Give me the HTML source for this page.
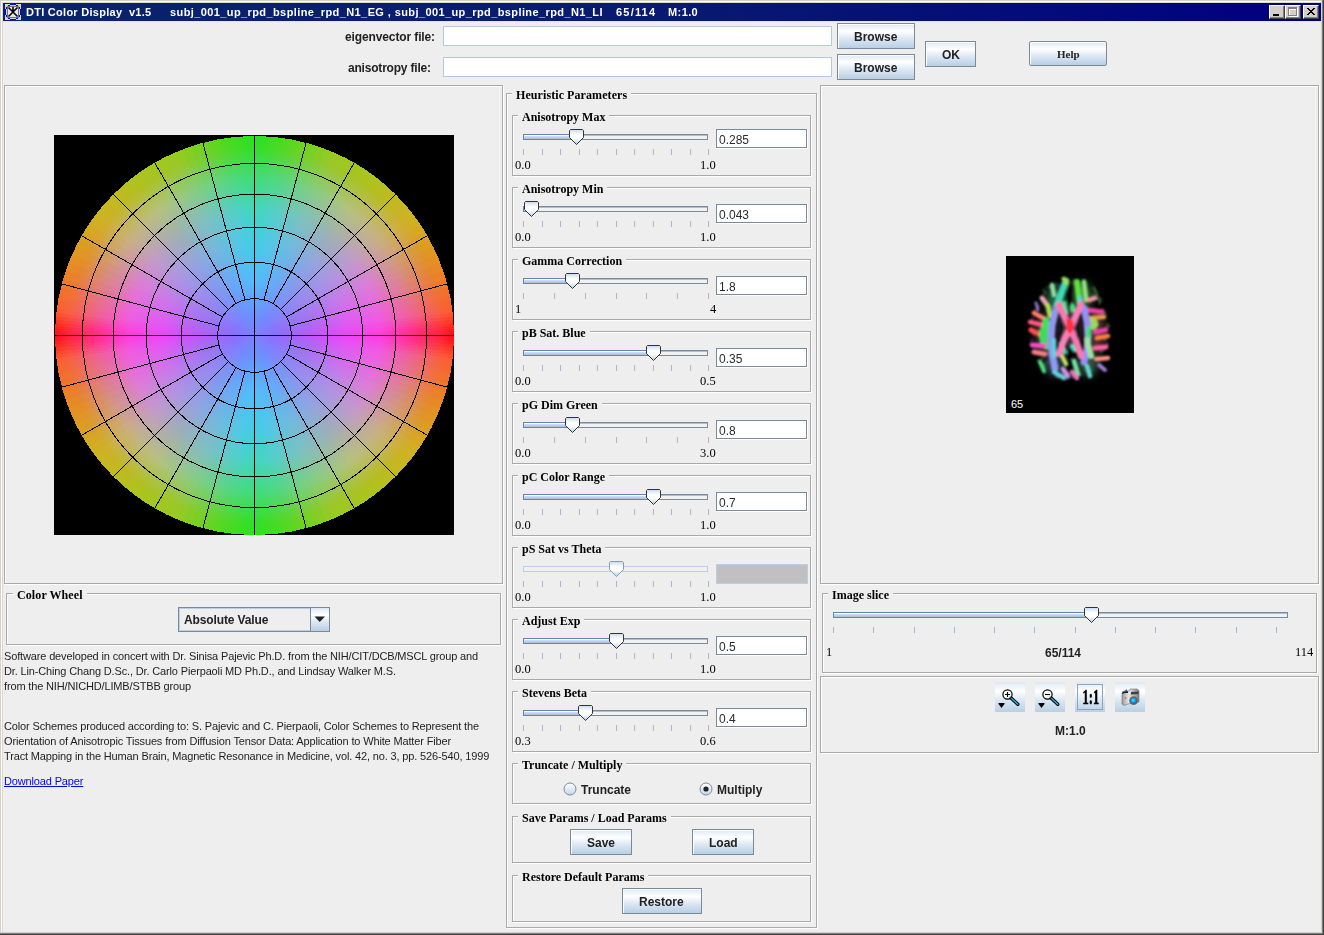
<!DOCTYPE html><html><head><meta charset="utf-8"><style>
html,body{margin:0;padding:0;}
body{width:1324px;height:935px;overflow:hidden;background:#eeeeee;position:relative;font-family:"Liberation Sans",sans-serif;}
.a{position:absolute;box-sizing:border-box;}
.t{position:absolute;white-space:pre;line-height:1;-webkit-font-smoothing:antialiased;will-change:transform;}
.btn{position:absolute;box-sizing:border-box;border:1px solid #7a8a99;background:linear-gradient(to bottom,#dde8f3 0%,#ffffff 30%,#dde8f3 60%,#b8cfe5 100%);box-shadow:inset 1px 1px 0 rgba(255,255,255,0.9);}
</style></head><body>
<div class="a" style="left:0px;top:0px;width:1324px;height:935px;background:#eeeeee"></div><div class="a" style="left:0px;top:0px;width:1324px;height:1px;background:#d4d0c8"></div><div class="a" style="left:0px;top:0px;width:1px;height:935px;background:#d4d0c8"></div><div class="a" style="left:1px;top:1px;width:1321px;height:1px;background:#ffffff"></div><div class="a" style="left:1px;top:1px;width:1px;height:933px;background:#ffffff"></div><div class="a" style="left:2px;top:2px;width:1319px;height:1px;background:#dcd8d0"></div><div class="a" style="left:2px;top:2px;width:1px;height:931px;background:#dcd8d0"></div><div class="a" style="left:3px;top:21px;width:1318px;height:1px;background:#e6e3de"></div><div class="a" style="left:1321px;top:1px;width:1px;height:933px;background:#d4d0c8"></div><div class="a" style="left:1px;top:932px;width:1321px;height:1px;background:#d4d0c8"></div><div class="a" style="left:1322px;top:0px;width:1px;height:935px;background:#808080"></div><div class="a" style="left:0px;top:933px;width:1323px;height:1px;background:#808080"></div><div class="a" style="left:1323px;top:0px;width:1px;height:935px;background:#404040"></div><div class="a" style="left:0px;top:934px;width:1324px;height:1px;background:#404040"></div><div class="a" style="left:3px;top:3px;width:1318px;height:18px;background:linear-gradient(to right,#0a246a,#081a70 50%,#000080)"></div><svg class="a" style="left:5px;top:4px" width="16" height="16" viewBox="0 0 16 16" shape-rendering="crispEdges">
<rect x="0" y="0" width="16" height="16" fill="#d8d4c8"/>
<rect x="2" y="2" width="12" height="12" fill="#e8e8e8" stroke="none"/>
<g fill="#0000ff"><rect x="5" y="0" width="6" height="1"/><rect x="5" y="15" width="6" height="1"/><rect x="0" y="5" width="1" height="6"/><rect x="15" y="5" width="1" height="6"/>
<rect x="3" y="1" width="2" height="1"/><rect x="11" y="1" width="2" height="1"/><rect x="3" y="14" width="2" height="1"/><rect x="11" y="14" width="2" height="1"/>
<rect x="1" y="3" width="1" height="2"/><rect x="1" y="11" width="1" height="2"/><rect x="14" y="3" width="1" height="2"/><rect x="14" y="11" width="1" height="2"/></g>
<rect x="2.5" y="2.5" width="11" height="11" fill="none" stroke="#707070" stroke-width="1"/>
</svg><svg class="a" style="left:5px;top:4px" width="16" height="16" viewBox="0 0 16 16">
<path d="M3.5 3.5 L12.5 12.5 M12.5 3.5 L3.5 12.5 M8 3 L8 8" stroke="#000" stroke-width="1.6" fill="none"/>
</svg><div class="t" style="left:26px;top:6.69px;font-family:'Liberation Sans', sans-serif;font-size:11px;font-weight:bold;color:#fff;letter-spacing:0.27px">DTI Color Display  v1.5</div><div class="t" style="left:169.5px;top:6.69px;font-family:'Liberation Sans', sans-serif;font-size:11px;font-weight:bold;color:#fff;letter-spacing:0.4px">subj_001_up_rpd_bspline_rpd_N1_EG , subj_001_up_rpd_bspline_rpd_N1_LI</div><div class="t" style="left:615.5px;top:6.69px;font-family:'Liberation Sans', sans-serif;font-size:11px;font-weight:bold;color:#fff;letter-spacing:1.2px">65/114</div><div class="t" style="left:668px;top:6.69px;font-family:'Liberation Sans', sans-serif;font-size:11px;font-weight:bold;color:#fff;letter-spacing:0.4px">M:1.0</div><div class="a" style="left:1269px;top:5px;width:16px;height:14px;background:#d4d0c8;border-top:1px solid #fff;border-left:1px solid #fff;border-right:1px solid #404040;border-bottom:1px solid #404040;box-shadow:inset -1px -1px 0 #808080"></div><div class="a" style="left:1285px;top:5px;width:16px;height:14px;background:#d4d0c8;border-top:1px solid #fff;border-left:1px solid #fff;border-right:1px solid #404040;border-bottom:1px solid #404040;box-shadow:inset -1px -1px 0 #808080"></div><div class="a" style="left:1303px;top:5px;width:16px;height:14px;background:#d4d0c8;border-top:1px solid #fff;border-left:1px solid #fff;border-right:1px solid #404040;border-bottom:1px solid #404040;box-shadow:inset -1px -1px 0 #808080"></div><div class="a" style="left:1273px;top:14px;width:6px;height:2px;background:#000"></div><div class="a" style="left:1289px;top:8px;width:9px;height:9px;border:1px solid #fff;border-top-width:2px"></div><div class="a" style="left:1288px;top:7px;width:9px;height:9px;border:1px solid #808080;border-top-width:2px"></div><svg class="a" style="left:1307px;top:8px" width="9" height="8" viewBox="0 0 9 8" shape-rendering="crispEdges"><g fill="#000">
<rect x="0" y="0" width="2" height="1"/><rect x="6" y="0" width="2" height="1"/>
<rect x="1" y="1" width="2" height="1"/><rect x="5" y="1" width="2" height="1"/>
<rect x="2" y="2" width="4" height="1"/><rect x="3" y="3" width="2" height="1"/>
<rect x="2" y="4" width="4" height="1"/><rect x="1" y="5" width="2" height="1"/><rect x="5" y="5" width="2" height="1"/>
<rect x="0" y="6" width="2" height="1"/><rect x="6" y="6" width="2" height="1"/></g></svg><div class="t" style="left:344.5px;top:30.84px;font-family:'Liberation Sans', sans-serif;font-size:12px;font-weight:bold;color:#222;letter-spacing:-0.12px">eigenvector file:</div><div class="t" style="left:347.5px;top:61.84px;font-family:'Liberation Sans', sans-serif;font-size:12px;font-weight:bold;color:#222;letter-spacing:-0.2px">anisotropy file:</div><div class="a" style="left:443px;top:26px;width:389px;height:20px;border:1px solid #b3c9e0;background:#fff"></div><div class="a" style="left:443px;top:57px;width:389px;height:20px;border:1px solid #b3c9e0;background:#fff"></div><div class="btn" style="left:837px;top:23px;width:78px;height:26px;"></div><div class="t" style="left:853.5px;top:30.84px;font-family:'Liberation Sans', sans-serif;font-size:12px;font-weight:bold;color:#222;">Browse</div><div class="btn" style="left:837px;top:54px;width:78px;height:26px;"></div><div class="t" style="left:853.5px;top:61.84px;font-family:'Liberation Sans', sans-serif;font-size:12px;font-weight:bold;color:#222;">Browse</div><div class="btn" style="left:925px;top:41px;width:51px;height:26px;"></div><div class="t" style="left:941.5px;top:48.84px;font-family:'Liberation Sans', sans-serif;font-size:12px;font-weight:bold;color:#222;">OK</div><div class="btn" style="left:1029px;top:41px;width:78px;height:25px;border-radius:2px"></div><div class="t" style="left:1057px;top:48.79px;font-family:'Liberation Serif', serif;font-size:11px;font-weight:bold;color:#222;">Help</div><div class="a" style="left:4px;top:85px;width:499px;height:499px;border:1px solid #a9a9a9;box-shadow:inset 1px 1px 0 #fff,1px 1px 0 #fff;box-sizing:border-box"></div><div class="a" style="left:54px;top:135px;width:400px;height:400px;background:#000"></div><svg class="a" style="left:54px;top:135px" width="400" height="400" viewBox="0 0 400 400"><defs><radialGradient id="w0" gradientUnits="userSpaceOnUse" cx="200.5" cy="200.5" r="200.0"><stop offset="0.0000" stop-color="#7d80ff"/><stop offset="0.0925" stop-color="#8c6eff"/><stop offset="0.1846" stop-color="#a960ff"/><stop offset="0.2759" stop-color="#c652fe"/><stop offset="0.3660" stop-color="#da4afc"/><stop offset="0.4546" stop-color="#ef42fa"/><stop offset="0.5412" stop-color="#f63eed"/><stop offset="0.6255" stop-color="#fe3ae0"/><stop offset="0.7071" stop-color="#ff32b6"/><stop offset="0.7857" stop-color="#ff2a8c"/><stop offset="0.8609" stop-color="#ff2365"/><stop offset="0.9325" stop-color="#ff1c3e"/><stop offset="1.0000" stop-color="#ff0614"/></radialGradient><radialGradient id="w1" gradientUnits="userSpaceOnUse" cx="200.5" cy="200.5" r="200.0"><stop offset="0.0000" stop-color="#7d80ff"/><stop offset="0.0925" stop-color="#8c6eff"/><stop offset="0.1846" stop-color="#a662fe"/><stop offset="0.2759" stop-color="#c254fd"/><stop offset="0.3660" stop-color="#d74dfb"/><stop offset="0.4546" stop-color="#ec46f9"/><stop offset="0.5412" stop-color="#f442ed"/><stop offset="0.6255" stop-color="#fc3fe1"/><stop offset="0.7071" stop-color="#fe37b7"/><stop offset="0.7857" stop-color="#ff2e8d"/><stop offset="0.8609" stop-color="#ff2a64"/><stop offset="0.9325" stop-color="#ff253c"/><stop offset="1.0000" stop-color="#ff1014"/></radialGradient><radialGradient id="w2" gradientUnits="userSpaceOnUse" cx="200.5" cy="200.5" r="200.0"><stop offset="0.0000" stop-color="#7d80ff"/><stop offset="0.0925" stop-color="#8b6fff"/><stop offset="0.1846" stop-color="#a463fd"/><stop offset="0.2759" stop-color="#bd58fc"/><stop offset="0.3660" stop-color="#d351fa"/><stop offset="0.4546" stop-color="#e94af8"/><stop offset="0.5412" stop-color="#f247ed"/><stop offset="0.6255" stop-color="#fb44e2"/><stop offset="0.7071" stop-color="#fd3bb8"/><stop offset="0.7857" stop-color="#ff338e"/><stop offset="0.8609" stop-color="#ff3063"/><stop offset="0.9325" stop-color="#ff2e38"/><stop offset="1.0000" stop-color="#ff1b14"/></radialGradient><radialGradient id="w3" gradientUnits="userSpaceOnUse" cx="200.5" cy="200.5" r="200.0"><stop offset="0.0000" stop-color="#7d80ff"/><stop offset="0.0925" stop-color="#8b6fff"/><stop offset="0.1846" stop-color="#a265fd"/><stop offset="0.2759" stop-color="#ba5afa"/><stop offset="0.3660" stop-color="#d054f9"/><stop offset="0.4546" stop-color="#e74df8"/><stop offset="0.5412" stop-color="#f04bed"/><stop offset="0.6255" stop-color="#f948e2"/><stop offset="0.7071" stop-color="#fb41b8"/><stop offset="0.7857" stop-color="#fd3a8f"/><stop offset="0.8609" stop-color="#fe3863"/><stop offset="0.9325" stop-color="#fe3738"/><stop offset="1.0000" stop-color="#ff2817"/></radialGradient><radialGradient id="w4" gradientUnits="userSpaceOnUse" cx="200.5" cy="200.5" r="200.0"><stop offset="0.0000" stop-color="#7d80ff"/><stop offset="0.0925" stop-color="#8b6fff"/><stop offset="0.1846" stop-color="#a166fc"/><stop offset="0.2759" stop-color="#b75df9"/><stop offset="0.3660" stop-color="#ce56f8"/><stop offset="0.4546" stop-color="#e650f7"/><stop offset="0.5412" stop-color="#ee4eec"/><stop offset="0.6255" stop-color="#f74de2"/><stop offset="0.7071" stop-color="#f848b9"/><stop offset="0.7857" stop-color="#fa4391"/><stop offset="0.8609" stop-color="#fb4265"/><stop offset="0.9325" stop-color="#fd413a"/><stop offset="1.0000" stop-color="#fe351c"/></radialGradient><radialGradient id="w5" gradientUnits="userSpaceOnUse" cx="200.5" cy="200.5" r="200.0"><stop offset="0.0000" stop-color="#7d80ff"/><stop offset="0.0925" stop-color="#8a70ff"/><stop offset="0.1846" stop-color="#a067fc"/><stop offset="0.2759" stop-color="#b55ff8"/><stop offset="0.3660" stop-color="#cc59f7"/><stop offset="0.4546" stop-color="#e453f6"/><stop offset="0.5412" stop-color="#ec52ec"/><stop offset="0.6255" stop-color="#f451e1"/><stop offset="0.7071" stop-color="#f64fba"/><stop offset="0.7857" stop-color="#f74d92"/><stop offset="0.8609" stop-color="#f94c67"/><stop offset="0.9325" stop-color="#fb4c3c"/><stop offset="1.0000" stop-color="#fd4221"/></radialGradient><radialGradient id="w6" gradientUnits="userSpaceOnUse" cx="200.5" cy="200.5" r="200.0"><stop offset="0.0000" stop-color="#7d80ff"/><stop offset="0.0925" stop-color="#8a70ff"/><stop offset="0.1846" stop-color="#9e69fb"/><stop offset="0.2759" stop-color="#b262f7"/><stop offset="0.3660" stop-color="#ca5bf6"/><stop offset="0.4546" stop-color="#e355f6"/><stop offset="0.5412" stop-color="#ea55eb"/><stop offset="0.6255" stop-color="#f256e1"/><stop offset="0.7071" stop-color="#f356bb"/><stop offset="0.7857" stop-color="#f35694"/><stop offset="0.8609" stop-color="#f65669"/><stop offset="0.9325" stop-color="#fa563e"/><stop offset="1.0000" stop-color="#fd4f27"/></radialGradient><radialGradient id="w7" gradientUnits="userSpaceOnUse" cx="200.5" cy="200.5" r="200.0"><stop offset="0.0000" stop-color="#7d80ff"/><stop offset="0.0925" stop-color="#8a70ff"/><stop offset="0.1846" stop-color="#9d6afa"/><stop offset="0.2759" stop-color="#b064f6"/><stop offset="0.3660" stop-color="#c85ef6"/><stop offset="0.4546" stop-color="#e158f5"/><stop offset="0.5412" stop-color="#e859eb"/><stop offset="0.6255" stop-color="#f05ae1"/><stop offset="0.7071" stop-color="#f05dbc"/><stop offset="0.7857" stop-color="#f06096"/><stop offset="0.8609" stop-color="#f4606b"/><stop offset="0.9325" stop-color="#f86040"/><stop offset="1.0000" stop-color="#fc5c2c"/></radialGradient><radialGradient id="w8" gradientUnits="userSpaceOnUse" cx="200.5" cy="200.5" r="200.0"><stop offset="0.0000" stop-color="#7d80ff"/><stop offset="0.0925" stop-color="#8a70ff"/><stop offset="0.1846" stop-color="#9c6bfa"/><stop offset="0.2759" stop-color="#af65f6"/><stop offset="0.3660" stop-color="#c760f5"/><stop offset="0.4546" stop-color="#df5af4"/><stop offset="0.5412" stop-color="#e75bea"/><stop offset="0.6255" stop-color="#ef5ce0"/><stop offset="0.7071" stop-color="#ef5fbb"/><stop offset="0.7857" stop-color="#ee6395"/><stop offset="0.8609" stop-color="#f2636a"/><stop offset="0.9325" stop-color="#f7633e"/><stop offset="1.0000" stop-color="#fa602b"/></radialGradient><radialGradient id="w9" gradientUnits="userSpaceOnUse" cx="200.5" cy="200.5" r="200.0"><stop offset="0.0000" stop-color="#7d80ff"/><stop offset="0.0925" stop-color="#8971ff"/><stop offset="0.1846" stop-color="#9c6cfa"/><stop offset="0.2759" stop-color="#ae67f5"/><stop offset="0.3660" stop-color="#c661f4"/><stop offset="0.4546" stop-color="#de5cf4"/><stop offset="0.5412" stop-color="#e65dea"/><stop offset="0.6255" stop-color="#ee5ee0"/><stop offset="0.7071" stop-color="#ed62ba"/><stop offset="0.7857" stop-color="#ed6694"/><stop offset="0.8609" stop-color="#f16668"/><stop offset="0.9325" stop-color="#f5663d"/><stop offset="1.0000" stop-color="#f9632a"/></radialGradient><radialGradient id="w10" gradientUnits="userSpaceOnUse" cx="200.5" cy="200.5" r="200.0"><stop offset="0.0000" stop-color="#7d80ff"/><stop offset="0.0925" stop-color="#8971ff"/><stop offset="0.1846" stop-color="#9b6dfa"/><stop offset="0.2759" stop-color="#ad68f5"/><stop offset="0.3660" stop-color="#c463f4"/><stop offset="0.4546" stop-color="#dc5ef3"/><stop offset="0.5412" stop-color="#e45fe9"/><stop offset="0.6255" stop-color="#ed60df"/><stop offset="0.7071" stop-color="#ec64b9"/><stop offset="0.7857" stop-color="#eb6992"/><stop offset="0.8609" stop-color="#ef6967"/><stop offset="0.9325" stop-color="#f4693b"/><stop offset="1.0000" stop-color="#f76729"/></radialGradient><radialGradient id="w11" gradientUnits="userSpaceOnUse" cx="200.5" cy="200.5" r="200.0"><stop offset="0.0000" stop-color="#7d80ff"/><stop offset="0.0925" stop-color="#8872ff"/><stop offset="0.1846" stop-color="#9a6dfa"/><stop offset="0.2759" stop-color="#ac69f4"/><stop offset="0.3660" stop-color="#c365f3"/><stop offset="0.4546" stop-color="#da61f2"/><stop offset="0.5412" stop-color="#e361e8"/><stop offset="0.6255" stop-color="#ec62de"/><stop offset="0.7071" stop-color="#ea67b8"/><stop offset="0.7857" stop-color="#e96c91"/><stop offset="0.8609" stop-color="#ee6c65"/><stop offset="0.9325" stop-color="#f36c3a"/><stop offset="1.0000" stop-color="#f66a28"/></radialGradient><radialGradient id="w12" gradientUnits="userSpaceOnUse" cx="200.5" cy="200.5" r="200.0"><stop offset="0.0000" stop-color="#7d80ff"/><stop offset="0.0925" stop-color="#8872ff"/><stop offset="0.1846" stop-color="#996ff9"/><stop offset="0.2759" stop-color="#aa6cf4"/><stop offset="0.3660" stop-color="#c168f2"/><stop offset="0.4546" stop-color="#d764f1"/><stop offset="0.5412" stop-color="#e165e7"/><stop offset="0.6255" stop-color="#ea66dd"/><stop offset="0.7071" stop-color="#e86bb6"/><stop offset="0.7857" stop-color="#e6718f"/><stop offset="0.8609" stop-color="#eb7163"/><stop offset="0.9325" stop-color="#f07137"/><stop offset="1.0000" stop-color="#f37127"/></radialGradient><radialGradient id="w13" gradientUnits="userSpaceOnUse" cx="200.5" cy="200.5" r="200.0"><stop offset="0.0000" stop-color="#7d80ff"/><stop offset="0.0925" stop-color="#8773ff"/><stop offset="0.1846" stop-color="#9771f9"/><stop offset="0.2759" stop-color="#a76ff3"/><stop offset="0.3660" stop-color="#bd6cf1"/><stop offset="0.4546" stop-color="#d36af0"/><stop offset="0.5412" stop-color="#dd6ae6"/><stop offset="0.6255" stop-color="#e76adc"/><stop offset="0.7071" stop-color="#e471b4"/><stop offset="0.7857" stop-color="#e2788c"/><stop offset="0.8609" stop-color="#e7785f"/><stop offset="0.9325" stop-color="#ed7833"/><stop offset="1.0000" stop-color="#ef7a24"/></radialGradient><radialGradient id="w14" gradientUnits="userSpaceOnUse" cx="200.5" cy="200.5" r="200.0"><stop offset="0.0000" stop-color="#7d80ff"/><stop offset="0.0925" stop-color="#8674ff"/><stop offset="0.1846" stop-color="#9573f8"/><stop offset="0.2759" stop-color="#a572f2"/><stop offset="0.3660" stop-color="#ba71f0"/><stop offset="0.4546" stop-color="#cf6fee"/><stop offset="0.5412" stop-color="#da6fe4"/><stop offset="0.6255" stop-color="#e570da"/><stop offset="0.7071" stop-color="#e178b1"/><stop offset="0.7857" stop-color="#dd8089"/><stop offset="0.8609" stop-color="#e4805c"/><stop offset="0.9325" stop-color="#ea802f"/><stop offset="1.0000" stop-color="#eb8322"/></radialGradient><radialGradient id="w15" gradientUnits="userSpaceOnUse" cx="200.5" cy="200.5" r="200.0"><stop offset="0.0000" stop-color="#7d80ff"/><stop offset="0.0925" stop-color="#8575ff"/><stop offset="0.1846" stop-color="#9375f8"/><stop offset="0.2759" stop-color="#a276f1"/><stop offset="0.3660" stop-color="#b675ee"/><stop offset="0.4546" stop-color="#cb74ec"/><stop offset="0.5412" stop-color="#d674e2"/><stop offset="0.6255" stop-color="#e274d8"/><stop offset="0.7071" stop-color="#dd7eaf"/><stop offset="0.7857" stop-color="#d98786"/><stop offset="0.8609" stop-color="#e08758"/><stop offset="0.9325" stop-color="#e6872b"/><stop offset="1.0000" stop-color="#e78c20"/></radialGradient><radialGradient id="w16" gradientUnits="userSpaceOnUse" cx="200.5" cy="200.5" r="200.0"><stop offset="0.0000" stop-color="#7d80ff"/><stop offset="0.0925" stop-color="#8476ff"/><stop offset="0.1846" stop-color="#9278f8"/><stop offset="0.2759" stop-color="#a079f0"/><stop offset="0.3660" stop-color="#b379ed"/><stop offset="0.4546" stop-color="#c679eb"/><stop offset="0.5412" stop-color="#d37ae0"/><stop offset="0.6255" stop-color="#df7ad6"/><stop offset="0.7071" stop-color="#da84ad"/><stop offset="0.7857" stop-color="#d58e84"/><stop offset="0.8609" stop-color="#dc8e56"/><stop offset="0.9325" stop-color="#e38e28"/><stop offset="1.0000" stop-color="#e3941e"/></radialGradient><radialGradient id="w17" gradientUnits="userSpaceOnUse" cx="200.5" cy="200.5" r="200.0"><stop offset="0.0000" stop-color="#7d80ff"/><stop offset="0.0925" stop-color="#8278ff"/><stop offset="0.1846" stop-color="#907af8"/><stop offset="0.2759" stop-color="#9e7bf0"/><stop offset="0.3660" stop-color="#b07ded"/><stop offset="0.4546" stop-color="#c27ee9"/><stop offset="0.5412" stop-color="#ce7fdf"/><stop offset="0.6255" stop-color="#da80d4"/><stop offset="0.7071" stop-color="#d68aab"/><stop offset="0.7857" stop-color="#d39483"/><stop offset="0.8609" stop-color="#d99456"/><stop offset="0.9325" stop-color="#e09428"/><stop offset="1.0000" stop-color="#e0991e"/></radialGradient><radialGradient id="w18" gradientUnits="userSpaceOnUse" cx="200.5" cy="200.5" r="200.0"><stop offset="0.0000" stop-color="#7d80ff"/><stop offset="0.0925" stop-color="#817aff"/><stop offset="0.1846" stop-color="#8f7cf8"/><stop offset="0.2759" stop-color="#9d7ef0"/><stop offset="0.3660" stop-color="#ad80ec"/><stop offset="0.4546" stop-color="#bc83e8"/><stop offset="0.5412" stop-color="#c984dd"/><stop offset="0.6255" stop-color="#d585d1"/><stop offset="0.7071" stop-color="#d390aa"/><stop offset="0.7857" stop-color="#d19a82"/><stop offset="0.8609" stop-color="#d69a55"/><stop offset="0.9325" stop-color="#dc9a28"/><stop offset="1.0000" stop-color="#dc9f1e"/></radialGradient><radialGradient id="w19" gradientUnits="userSpaceOnUse" cx="200.5" cy="200.5" r="200.0"><stop offset="0.0000" stop-color="#7d80ff"/><stop offset="0.0925" stop-color="#807cff"/><stop offset="0.1846" stop-color="#8e7ef7"/><stop offset="0.2759" stop-color="#9c81f0"/><stop offset="0.3660" stop-color="#aa84ec"/><stop offset="0.4546" stop-color="#b887e7"/><stop offset="0.5412" stop-color="#c489db"/><stop offset="0.6255" stop-color="#d08bcf"/><stop offset="0.7071" stop-color="#cf96a8"/><stop offset="0.7857" stop-color="#cea082"/><stop offset="0.8609" stop-color="#d4a055"/><stop offset="0.9325" stop-color="#d9a028"/><stop offset="1.0000" stop-color="#d9a51e"/></radialGradient><radialGradient id="w20" gradientUnits="userSpaceOnUse" cx="200.5" cy="200.5" r="200.0"><stop offset="0.0000" stop-color="#7d80ff"/><stop offset="0.0925" stop-color="#7f7dff"/><stop offset="0.1846" stop-color="#8d80f8"/><stop offset="0.2759" stop-color="#9a83f0"/><stop offset="0.3660" stop-color="#a688eb"/><stop offset="0.4546" stop-color="#b28ce6"/><stop offset="0.5412" stop-color="#bf8fd9"/><stop offset="0.6255" stop-color="#cb91cc"/><stop offset="0.7071" stop-color="#cc9ba7"/><stop offset="0.7857" stop-color="#cca681"/><stop offset="0.8609" stop-color="#d1a655"/><stop offset="0.9325" stop-color="#d6a628"/><stop offset="1.0000" stop-color="#d6aa1e"/></radialGradient><radialGradient id="w21" gradientUnits="userSpaceOnUse" cx="200.5" cy="200.5" r="200.0"><stop offset="0.0000" stop-color="#7d80ff"/><stop offset="0.0925" stop-color="#7e7fff"/><stop offset="0.1846" stop-color="#8b82f8"/><stop offset="0.2759" stop-color="#9986f0"/><stop offset="0.3660" stop-color="#a38bea"/><stop offset="0.4546" stop-color="#ae91e5"/><stop offset="0.5412" stop-color="#ba94d7"/><stop offset="0.6255" stop-color="#c697ca"/><stop offset="0.7071" stop-color="#c8a1a5"/><stop offset="0.7857" stop-color="#caac80"/><stop offset="0.8609" stop-color="#ceac54"/><stop offset="0.9325" stop-color="#d2ac28"/><stop offset="1.0000" stop-color="#d2b01e"/></radialGradient><radialGradient id="w22" gradientUnits="userSpaceOnUse" cx="200.5" cy="200.5" r="200.0"><stop offset="0.0000" stop-color="#7d80ff"/><stop offset="0.0925" stop-color="#7d80ff"/><stop offset="0.1846" stop-color="#8a85f8"/><stop offset="0.2759" stop-color="#9789f0"/><stop offset="0.3660" stop-color="#a08fea"/><stop offset="0.4546" stop-color="#a995e4"/><stop offset="0.5412" stop-color="#b598d5"/><stop offset="0.6255" stop-color="#c19cc7"/><stop offset="0.7071" stop-color="#c4a6a3"/><stop offset="0.7857" stop-color="#c7b180"/><stop offset="0.8609" stop-color="#cbb154"/><stop offset="0.9325" stop-color="#ceb128"/><stop offset="1.0000" stop-color="#ceb51e"/></radialGradient><radialGradient id="w23" gradientUnits="userSpaceOnUse" cx="200.5" cy="200.5" r="200.0"><stop offset="0.0000" stop-color="#7d80ff"/><stop offset="0.0925" stop-color="#7b81ff"/><stop offset="0.1846" stop-color="#8786f8"/><stop offset="0.2759" stop-color="#938bf0"/><stop offset="0.3660" stop-color="#9c92ea"/><stop offset="0.4546" stop-color="#a598e3"/><stop offset="0.5412" stop-color="#b09cd3"/><stop offset="0.6255" stop-color="#bba0c3"/><stop offset="0.7071" stop-color="#c0aaa1"/><stop offset="0.7857" stop-color="#c5b380"/><stop offset="0.8609" stop-color="#c7b353"/><stop offset="0.9325" stop-color="#c9b326"/><stop offset="1.0000" stop-color="#c9b71e"/></radialGradient><radialGradient id="w24" gradientUnits="userSpaceOnUse" cx="200.5" cy="200.5" r="200.0"><stop offset="0.0000" stop-color="#7d80ff"/><stop offset="0.0925" stop-color="#7a82ff"/><stop offset="0.1846" stop-color="#8588f8"/><stop offset="0.2759" stop-color="#8f8ef0"/><stop offset="0.3660" stop-color="#9894e9"/><stop offset="0.4546" stop-color="#a09be3"/><stop offset="0.5412" stop-color="#ab9fd1"/><stop offset="0.6255" stop-color="#b6a3bf"/><stop offset="0.7071" stop-color="#bcad9f"/><stop offset="0.7857" stop-color="#c2b680"/><stop offset="0.8609" stop-color="#c3b652"/><stop offset="0.9325" stop-color="#c4b625"/><stop offset="1.0000" stop-color="#c4ba1d"/></radialGradient><radialGradient id="w25" gradientUnits="userSpaceOnUse" cx="200.5" cy="200.5" r="200.0"><stop offset="0.0000" stop-color="#7d80ff"/><stop offset="0.0925" stop-color="#7983ff"/><stop offset="0.1846" stop-color="#828af7"/><stop offset="0.2759" stop-color="#8b91f0"/><stop offset="0.3660" stop-color="#9497e9"/><stop offset="0.4546" stop-color="#9c9de2"/><stop offset="0.5412" stop-color="#a6a2cf"/><stop offset="0.6255" stop-color="#b0a7bb"/><stop offset="0.7071" stop-color="#b7b09d"/><stop offset="0.7857" stop-color="#bfb980"/><stop offset="0.8609" stop-color="#bfb952"/><stop offset="0.9325" stop-color="#beb924"/><stop offset="1.0000" stop-color="#bebd1d"/></radialGradient><radialGradient id="w26" gradientUnits="userSpaceOnUse" cx="200.5" cy="200.5" r="200.0"><stop offset="0.0000" stop-color="#7d80ff"/><stop offset="0.0925" stop-color="#7884ff"/><stop offset="0.1846" stop-color="#7f8cf8"/><stop offset="0.2759" stop-color="#8793f0"/><stop offset="0.3660" stop-color="#8f9ae9"/><stop offset="0.4546" stop-color="#98a0e2"/><stop offset="0.5412" stop-color="#a1a5cc"/><stop offset="0.6255" stop-color="#aaaab7"/><stop offset="0.7071" stop-color="#b3b39b"/><stop offset="0.7857" stop-color="#bdbb80"/><stop offset="0.8609" stop-color="#bbbb51"/><stop offset="0.9325" stop-color="#b9bb22"/><stop offset="1.0000" stop-color="#b9bf1d"/></radialGradient><radialGradient id="w27" gradientUnits="userSpaceOnUse" cx="200.5" cy="200.5" r="200.0"><stop offset="0.0000" stop-color="#7d80ff"/><stop offset="0.0925" stop-color="#7785ff"/><stop offset="0.1846" stop-color="#7d8ef8"/><stop offset="0.2759" stop-color="#8396f0"/><stop offset="0.3660" stop-color="#8b9de9"/><stop offset="0.4546" stop-color="#94a3e1"/><stop offset="0.5412" stop-color="#9ca8ca"/><stop offset="0.6255" stop-color="#a4aeb3"/><stop offset="0.7071" stop-color="#afb699"/><stop offset="0.7857" stop-color="#babe80"/><stop offset="0.8609" stop-color="#b7be50"/><stop offset="0.9325" stop-color="#b4be21"/><stop offset="1.0000" stop-color="#b4c21c"/></radialGradient><radialGradient id="w28" gradientUnits="userSpaceOnUse" cx="200.5" cy="200.5" r="200.0"><stop offset="0.0000" stop-color="#7d80ff"/><stop offset="0.0925" stop-color="#7686ff"/><stop offset="0.1846" stop-color="#7a90f8"/><stop offset="0.2759" stop-color="#7f99f0"/><stop offset="0.3660" stop-color="#879fe9"/><stop offset="0.4546" stop-color="#8fa6e1"/><stop offset="0.5412" stop-color="#97abc9"/><stop offset="0.6255" stop-color="#9eb1b1"/><stop offset="0.7071" stop-color="#aab998"/><stop offset="0.7857" stop-color="#b6c180"/><stop offset="0.8609" stop-color="#b2c050"/><stop offset="0.9325" stop-color="#afc020"/><stop offset="1.0000" stop-color="#afc41c"/></radialGradient><radialGradient id="w29" gradientUnits="userSpaceOnUse" cx="200.5" cy="200.5" r="200.0"><stop offset="0.0000" stop-color="#7d80ff"/><stop offset="0.0925" stop-color="#7487ff"/><stop offset="0.1846" stop-color="#7891f8"/><stop offset="0.2759" stop-color="#7b9bf2"/><stop offset="0.3660" stop-color="#82a2e9"/><stop offset="0.4546" stop-color="#8aa9e1"/><stop offset="0.5412" stop-color="#91aeca"/><stop offset="0.6255" stop-color="#99b3b3"/><stop offset="0.7071" stop-color="#a3bb9a"/><stop offset="0.7857" stop-color="#aec380"/><stop offset="0.8609" stop-color="#acc251"/><stop offset="0.9325" stop-color="#abc222"/><stop offset="1.0000" stop-color="#aac61c"/></radialGradient><radialGradient id="w30" gradientUnits="userSpaceOnUse" cx="200.5" cy="200.5" r="200.0"><stop offset="0.0000" stop-color="#7d80ff"/><stop offset="0.0925" stop-color="#7388ff"/><stop offset="0.1846" stop-color="#7593f9"/><stop offset="0.2759" stop-color="#779ef3"/><stop offset="0.3660" stop-color="#7ea5ea"/><stop offset="0.4546" stop-color="#84ace1"/><stop offset="0.5412" stop-color="#8cb1cb"/><stop offset="0.6255" stop-color="#94b6b6"/><stop offset="0.7071" stop-color="#9dbd9b"/><stop offset="0.7857" stop-color="#a6c580"/><stop offset="0.8609" stop-color="#a6c452"/><stop offset="0.9325" stop-color="#a7c323"/><stop offset="1.0000" stop-color="#a6c71d"/></radialGradient><radialGradient id="w31" gradientUnits="userSpaceOnUse" cx="200.5" cy="200.5" r="200.0"><stop offset="0.0000" stop-color="#7d80ff"/><stop offset="0.0925" stop-color="#7289ff"/><stop offset="0.1846" stop-color="#7295fa"/><stop offset="0.2759" stop-color="#73a1f4"/><stop offset="0.3660" stop-color="#79a8ea"/><stop offset="0.4546" stop-color="#7fafe0"/><stop offset="0.5412" stop-color="#87b4cd"/><stop offset="0.6255" stop-color="#8eb9b9"/><stop offset="0.7071" stop-color="#96c09c"/><stop offset="0.7857" stop-color="#9ec780"/><stop offset="0.8609" stop-color="#a0c652"/><stop offset="0.9325" stop-color="#a3c424"/><stop offset="1.0000" stop-color="#a2c81d"/></radialGradient><radialGradient id="w32" gradientUnits="userSpaceOnUse" cx="200.5" cy="200.5" r="200.0"><stop offset="0.0000" stop-color="#7d80ff"/><stop offset="0.0925" stop-color="#708aff"/><stop offset="0.1846" stop-color="#7097fa"/><stop offset="0.2759" stop-color="#6fa3f6"/><stop offset="0.3660" stop-color="#74abeb"/><stop offset="0.4546" stop-color="#79b3e0"/><stop offset="0.5412" stop-color="#81b7ce"/><stop offset="0.6255" stop-color="#89bbbb"/><stop offset="0.7071" stop-color="#8fc29e"/><stop offset="0.7857" stop-color="#96c980"/><stop offset="0.8609" stop-color="#9ac753"/><stop offset="0.9325" stop-color="#9fc626"/><stop offset="1.0000" stop-color="#9dca1d"/></radialGradient><radialGradient id="w33" gradientUnits="userSpaceOnUse" cx="200.5" cy="200.5" r="200.0"><stop offset="0.0000" stop-color="#7d80ff"/><stop offset="0.0925" stop-color="#6f8bff"/><stop offset="0.1846" stop-color="#6d99fb"/><stop offset="0.2759" stop-color="#6ba6f7"/><stop offset="0.3660" stop-color="#6faeec"/><stop offset="0.4546" stop-color="#74b6e0"/><stop offset="0.5412" stop-color="#7cbacf"/><stop offset="0.6255" stop-color="#84bebe"/><stop offset="0.7071" stop-color="#89c49f"/><stop offset="0.7857" stop-color="#8ecb80"/><stop offset="0.8609" stop-color="#94c954"/><stop offset="0.9325" stop-color="#9bc727"/><stop offset="1.0000" stop-color="#99cb1e"/></radialGradient><radialGradient id="w34" gradientUnits="userSpaceOnUse" cx="200.5" cy="200.5" r="200.0"><stop offset="0.0000" stop-color="#7d80ff"/><stop offset="0.0925" stop-color="#6e8cff"/><stop offset="0.1846" stop-color="#6a9bfc"/><stop offset="0.2759" stop-color="#67a9f8"/><stop offset="0.3660" stop-color="#6bb1ec"/><stop offset="0.4546" stop-color="#6eb9e0"/><stop offset="0.5412" stop-color="#76bdd0"/><stop offset="0.6255" stop-color="#7ec1c0"/><stop offset="0.7071" stop-color="#81c7a0"/><stop offset="0.7857" stop-color="#85cd80"/><stop offset="0.8609" stop-color="#8dcb54"/><stop offset="0.9325" stop-color="#94c928"/><stop offset="1.0000" stop-color="#92cd1e"/></radialGradient><radialGradient id="w35" gradientUnits="userSpaceOnUse" cx="200.5" cy="200.5" r="200.0"><stop offset="0.0000" stop-color="#7d80ff"/><stop offset="0.0925" stop-color="#6d8dff"/><stop offset="0.1846" stop-color="#699cfc"/><stop offset="0.2759" stop-color="#65abf8"/><stop offset="0.3660" stop-color="#67b3ed"/><stop offset="0.4546" stop-color="#69bbe2"/><stop offset="0.5412" stop-color="#6fbfd2"/><stop offset="0.6255" stop-color="#76c3c2"/><stop offset="0.7071" stop-color="#79c9a1"/><stop offset="0.7857" stop-color="#7ccf80"/><stop offset="0.8609" stop-color="#82cd54"/><stop offset="0.9325" stop-color="#88cb28"/><stop offset="1.0000" stop-color="#85cf1e"/></radialGradient><radialGradient id="w36" gradientUnits="userSpaceOnUse" cx="200.5" cy="200.5" r="200.0"><stop offset="0.0000" stop-color="#7d80ff"/><stop offset="0.0925" stop-color="#6c8eff"/><stop offset="0.1846" stop-color="#679efc"/><stop offset="0.2759" stop-color="#62aef8"/><stop offset="0.3660" stop-color="#63b6ee"/><stop offset="0.4546" stop-color="#64bee3"/><stop offset="0.5412" stop-color="#69c2d3"/><stop offset="0.6255" stop-color="#6ec6c3"/><stop offset="0.7071" stop-color="#70cba2"/><stop offset="0.7857" stop-color="#73d180"/><stop offset="0.8609" stop-color="#77cf54"/><stop offset="0.9325" stop-color="#7cce28"/><stop offset="1.0000" stop-color="#77d21e"/></radialGradient><radialGradient id="w37" gradientUnits="userSpaceOnUse" cx="200.5" cy="200.5" r="200.0"><stop offset="0.0000" stop-color="#7d80ff"/><stop offset="0.0925" stop-color="#6b8fff"/><stop offset="0.1846" stop-color="#65a0fc"/><stop offset="0.2759" stop-color="#5fb1f8"/><stop offset="0.3660" stop-color="#5fb9ee"/><stop offset="0.4546" stop-color="#5ec1e4"/><stop offset="0.5412" stop-color="#62c5d4"/><stop offset="0.6255" stop-color="#66c9c4"/><stop offset="0.7071" stop-color="#67cea2"/><stop offset="0.7857" stop-color="#69d380"/><stop offset="0.8609" stop-color="#6dd254"/><stop offset="0.9325" stop-color="#70d128"/><stop offset="1.0000" stop-color="#6ad51e"/></radialGradient><radialGradient id="w38" gradientUnits="userSpaceOnUse" cx="200.5" cy="200.5" r="200.0"><stop offset="0.0000" stop-color="#7d80ff"/><stop offset="0.0925" stop-color="#6b8fff"/><stop offset="0.1846" stop-color="#64a1fc"/><stop offset="0.2759" stop-color="#5db3f8"/><stop offset="0.3660" stop-color="#5cbbef"/><stop offset="0.4546" stop-color="#5bc3e5"/><stop offset="0.5412" stop-color="#5dc7d5"/><stop offset="0.6255" stop-color="#60cbc5"/><stop offset="0.7071" stop-color="#61cfa3"/><stop offset="0.7857" stop-color="#63d480"/><stop offset="0.8609" stop-color="#65d354"/><stop offset="0.9325" stop-color="#68d328"/><stop offset="1.0000" stop-color="#61d71e"/></radialGradient><radialGradient id="w39" gradientUnits="userSpaceOnUse" cx="200.5" cy="200.5" r="200.0"><stop offset="0.0000" stop-color="#7d80ff"/><stop offset="0.0925" stop-color="#6a90ff"/><stop offset="0.1846" stop-color="#63a2fc"/><stop offset="0.2759" stop-color="#5cb4f8"/><stop offset="0.3660" stop-color="#5abcef"/><stop offset="0.4546" stop-color="#59c4e6"/><stop offset="0.5412" stop-color="#5bc8d6"/><stop offset="0.6255" stop-color="#5dccc6"/><stop offset="0.7071" stop-color="#5ed0a3"/><stop offset="0.7857" stop-color="#5fd580"/><stop offset="0.8609" stop-color="#61d454"/><stop offset="0.9325" stop-color="#63d428"/><stop offset="1.0000" stop-color="#5bd81e"/></radialGradient><radialGradient id="w40" gradientUnits="userSpaceOnUse" cx="200.5" cy="200.5" r="200.0"><stop offset="0.0000" stop-color="#7d80ff"/><stop offset="0.0925" stop-color="#6a90ff"/><stop offset="0.1846" stop-color="#63a2fc"/><stop offset="0.2759" stop-color="#5bb5f8"/><stop offset="0.3660" stop-color="#59bdef"/><stop offset="0.4546" stop-color="#56c5e6"/><stop offset="0.5412" stop-color="#58c9d6"/><stop offset="0.6255" stop-color="#5acdc6"/><stop offset="0.7071" stop-color="#5ad1a3"/><stop offset="0.7857" stop-color="#5bd680"/><stop offset="0.8609" stop-color="#5dd554"/><stop offset="0.9325" stop-color="#5ed528"/><stop offset="1.0000" stop-color="#56d91e"/></radialGradient><radialGradient id="w41" gradientUnits="userSpaceOnUse" cx="200.5" cy="200.5" r="200.0"><stop offset="0.0000" stop-color="#7d80ff"/><stop offset="0.0925" stop-color="#6a90ff"/><stop offset="0.1846" stop-color="#62a3fc"/><stop offset="0.2759" stop-color="#5ab6f8"/><stop offset="0.3660" stop-color="#57beef"/><stop offset="0.4546" stop-color="#54c6e7"/><stop offset="0.5412" stop-color="#55cad7"/><stop offset="0.6255" stop-color="#56cec7"/><stop offset="0.7071" stop-color="#57d2a3"/><stop offset="0.7857" stop-color="#57d680"/><stop offset="0.8609" stop-color="#59d654"/><stop offset="0.9325" stop-color="#5ad628"/><stop offset="1.0000" stop-color="#51da1e"/></radialGradient><radialGradient id="w42" gradientUnits="userSpaceOnUse" cx="200.5" cy="200.5" r="200.0"><stop offset="0.0000" stop-color="#7d80ff"/><stop offset="0.0925" stop-color="#6991ff"/><stop offset="0.1846" stop-color="#61a4fc"/><stop offset="0.2759" stop-color="#59b7f8"/><stop offset="0.3660" stop-color="#56bff0"/><stop offset="0.4546" stop-color="#52c7e7"/><stop offset="0.5412" stop-color="#53cbd7"/><stop offset="0.6255" stop-color="#53cfc7"/><stop offset="0.7071" stop-color="#53d3a4"/><stop offset="0.7857" stop-color="#54d780"/><stop offset="0.8609" stop-color="#54d754"/><stop offset="0.9325" stop-color="#55d728"/><stop offset="1.0000" stop-color="#4bdb1e"/></radialGradient><radialGradient id="w43" gradientUnits="userSpaceOnUse" cx="200.5" cy="200.5" r="200.0"><stop offset="0.0000" stop-color="#7d80ff"/><stop offset="0.0925" stop-color="#6991ff"/><stop offset="0.1846" stop-color="#60a4fc"/><stop offset="0.2759" stop-color="#58b8f8"/><stop offset="0.3660" stop-color="#54c0f0"/><stop offset="0.4546" stop-color="#50c8e8"/><stop offset="0.5412" stop-color="#50ccd8"/><stop offset="0.6255" stop-color="#50d0c8"/><stop offset="0.7071" stop-color="#50d4a4"/><stop offset="0.7857" stop-color="#50d880"/><stop offset="0.8609" stop-color="#50d854"/><stop offset="0.9325" stop-color="#50d828"/><stop offset="1.0000" stop-color="#46dc1e"/></radialGradient><radialGradient id="w44" gradientUnits="userSpaceOnUse" cx="200.5" cy="200.5" r="200.0"><stop offset="0.0000" stop-color="#7d80ff"/><stop offset="0.0925" stop-color="#6991ff"/><stop offset="0.1846" stop-color="#60a5fc"/><stop offset="0.2759" stop-color="#57b9f8"/><stop offset="0.3660" stop-color="#52c1f0"/><stop offset="0.4546" stop-color="#4ec9e8"/><stop offset="0.5412" stop-color="#4ecdd7"/><stop offset="0.6255" stop-color="#4ed1c7"/><stop offset="0.7071" stop-color="#4ed5a3"/><stop offset="0.7857" stop-color="#4ed97f"/><stop offset="0.8609" stop-color="#4dd953"/><stop offset="0.9325" stop-color="#4cd928"/><stop offset="1.0000" stop-color="#42dd1e"/></radialGradient><radialGradient id="w45" gradientUnits="userSpaceOnUse" cx="200.5" cy="200.5" r="200.0"><stop offset="0.0000" stop-color="#7d80ff"/><stop offset="0.0925" stop-color="#6991ff"/><stop offset="0.1846" stop-color="#5fa5fc"/><stop offset="0.2759" stop-color="#56baf9"/><stop offset="0.3660" stop-color="#51c1f0"/><stop offset="0.4546" stop-color="#4cc9e8"/><stop offset="0.5412" stop-color="#4cced7"/><stop offset="0.6255" stop-color="#4cd2c5"/><stop offset="0.7071" stop-color="#4cd5a2"/><stop offset="0.7857" stop-color="#4cd97e"/><stop offset="0.8609" stop-color="#4ada53"/><stop offset="0.9325" stop-color="#47da28"/><stop offset="1.0000" stop-color="#3ede1e"/></radialGradient><radialGradient id="w46" gradientUnits="userSpaceOnUse" cx="200.5" cy="200.5" r="200.0"><stop offset="0.0000" stop-color="#7d80ff"/><stop offset="0.0925" stop-color="#6991ff"/><stop offset="0.1846" stop-color="#5fa6fc"/><stop offset="0.2759" stop-color="#55baf9"/><stop offset="0.3660" stop-color="#4fc2f0"/><stop offset="0.4546" stop-color="#4acae8"/><stop offset="0.5412" stop-color="#4aced6"/><stop offset="0.6255" stop-color="#4ad3c4"/><stop offset="0.7071" stop-color="#4ad6a0"/><stop offset="0.7857" stop-color="#4ada7d"/><stop offset="0.8609" stop-color="#46da52"/><stop offset="0.9325" stop-color="#43db28"/><stop offset="1.0000" stop-color="#3adf1e"/></radialGradient><radialGradient id="w47" gradientUnits="userSpaceOnUse" cx="200.5" cy="200.5" r="200.0"><stop offset="0.0000" stop-color="#7d80ff"/><stop offset="0.0925" stop-color="#6892ff"/><stop offset="0.1846" stop-color="#5ea6fc"/><stop offset="0.2759" stop-color="#54bbf9"/><stop offset="0.3660" stop-color="#4ec3f1"/><stop offset="0.4546" stop-color="#47cbe8"/><stop offset="0.5412" stop-color="#47cfd5"/><stop offset="0.6255" stop-color="#47d4c3"/><stop offset="0.7071" stop-color="#47d79f"/><stop offset="0.7857" stop-color="#47da7c"/><stop offset="0.8609" stop-color="#43db52"/><stop offset="0.9325" stop-color="#3fdc28"/><stop offset="1.0000" stop-color="#36e01e"/></radialGradient><radialGradient id="w48" gradientUnits="userSpaceOnUse" cx="200.5" cy="200.5" r="200.0"><stop offset="0.0000" stop-color="#7d80ff"/><stop offset="0.0925" stop-color="#6892ff"/><stop offset="0.1846" stop-color="#5ea7fc"/><stop offset="0.2759" stop-color="#53bcf9"/><stop offset="0.3660" stop-color="#4cc4f1"/><stop offset="0.4546" stop-color="#45cbe8"/><stop offset="0.5412" stop-color="#45d0d5"/><stop offset="0.6255" stop-color="#45d5c1"/><stop offset="0.7071" stop-color="#45d89e"/><stop offset="0.7857" stop-color="#45db7b"/><stop offset="0.8609" stop-color="#40dc51"/><stop offset="0.9325" stop-color="#3bdd28"/><stop offset="1.0000" stop-color="#32e11e"/></radialGradient><radialGradient id="w49" gradientUnits="userSpaceOnUse" cx="200.5" cy="200.5" r="200.0"><stop offset="0.0000" stop-color="#7d80ff"/><stop offset="0.0925" stop-color="#6892ff"/><stop offset="0.1846" stop-color="#5da7fc"/><stop offset="0.2759" stop-color="#52bdfa"/><stop offset="0.3660" stop-color="#4ac4f1"/><stop offset="0.4546" stop-color="#43cce8"/><stop offset="0.5412" stop-color="#43d1d4"/><stop offset="0.6255" stop-color="#43d6c0"/><stop offset="0.7071" stop-color="#43d89d"/><stop offset="0.7857" stop-color="#43db7a"/><stop offset="0.8609" stop-color="#3ddd51"/><stop offset="0.9325" stop-color="#36de28"/><stop offset="1.0000" stop-color="#2ee21e"/></radialGradient><radialGradient id="w50" gradientUnits="userSpaceOnUse" cx="200.5" cy="200.5" r="200.0"><stop offset="0.0000" stop-color="#7d80ff"/><stop offset="0.0925" stop-color="#6892ff"/><stop offset="0.1846" stop-color="#5ca8fc"/><stop offset="0.2759" stop-color="#51befa"/><stop offset="0.3660" stop-color="#49c5f1"/><stop offset="0.4546" stop-color="#41cde8"/><stop offset="0.5412" stop-color="#41d2d3"/><stop offset="0.6255" stop-color="#41d7bf"/><stop offset="0.7071" stop-color="#41d99c"/><stop offset="0.7857" stop-color="#41dc79"/><stop offset="0.8609" stop-color="#3ade50"/><stop offset="0.9325" stop-color="#32df28"/><stop offset="1.0000" stop-color="#2ae31e"/></radialGradient><clipPath id="wc"><circle cx="200.5" cy="200.5" r="200.0"/></clipPath><g id="q"><path d="M200.5 200.5L400.49 202.25A200.0 200.0 0 0 0 400.43 195.26Z" fill="url(#w0)"/><path d="M200.5 200.5L400.49 198.75A200.0 200.0 0 0 0 400.31 191.78Z" fill="url(#w1)"/><path d="M200.5 200.5L400.43 195.26A200.0 200.0 0 0 0 400.13 188.29Z" fill="url(#w2)"/><path d="M200.5 200.5L400.31 191.78A200.0 200.0 0 0 0 399.88 184.81Z" fill="url(#w3)"/><path d="M200.5 200.5L400.13 188.29A200.0 200.0 0 0 0 399.58 181.33Z" fill="url(#w4)"/><path d="M200.5 200.5L399.88 184.81A200.0 200.0 0 0 0 399.21 177.86Z" fill="url(#w5)"/><path d="M200.5 200.5L399.58 181.33A200.0 200.0 0 0 0 398.79 174.39Z" fill="url(#w6)"/><path d="M200.5 200.5L399.21 177.86A200.0 200.0 0 0 0 398.30 170.94Z" fill="url(#w7)"/><path d="M200.5 200.5L398.79 174.39A200.0 200.0 0 0 0 397.76 167.49Z" fill="url(#w8)"/><path d="M200.5 200.5L398.30 170.94A200.0 200.0 0 0 0 397.15 164.05Z" fill="url(#w9)"/><path d="M200.5 200.5L397.76 167.49A200.0 200.0 0 0 0 396.48 160.63Z" fill="url(#w10)"/><path d="M200.5 200.5L397.15 164.05A200.0 200.0 0 0 0 395.76 157.21Z" fill="url(#w11)"/><path d="M200.5 200.5L396.48 160.63A200.0 200.0 0 0 0 393.69 148.74Z" fill="url(#w12)"/><path d="M200.5 200.5L394.56 152.12A200.0 200.0 0 0 0 391.24 140.36Z" fill="url(#w13)"/><path d="M200.5 200.5L392.26 143.70A200.0 200.0 0 0 0 388.44 132.10Z" fill="url(#w14)"/><path d="M200.5 200.5L389.60 135.39A200.0 200.0 0 0 0 385.28 123.96Z" fill="url(#w15)"/><path d="M200.5 200.5L386.58 127.20A200.0 200.0 0 0 0 381.76 115.98Z" fill="url(#w16)"/><path d="M200.5 200.5L383.21 119.15A200.0 200.0 0 0 0 377.90 108.15Z" fill="url(#w17)"/><path d="M200.5 200.5L379.49 111.26A200.0 200.0 0 0 0 373.71 100.50Z" fill="url(#w18)"/><path d="M200.5 200.5L375.42 103.54A200.0 200.0 0 0 0 369.18 93.04Z" fill="url(#w19)"/><path d="M200.5 200.5L371.03 96.00A200.0 200.0 0 0 0 364.33 85.78Z" fill="url(#w20)"/><path d="M200.5 200.5L366.31 88.66A200.0 200.0 0 0 0 359.17 78.75Z" fill="url(#w21)"/><path d="M200.5 200.5L361.27 81.54A200.0 200.0 0 0 0 353.71 71.94Z" fill="url(#w22)"/><path d="M200.5 200.5L355.93 74.64A200.0 200.0 0 0 0 347.96 65.38Z" fill="url(#w23)"/><path d="M200.5 200.5L350.29 67.98A200.0 200.0 0 0 0 341.92 59.08Z" fill="url(#w24)"/><path d="M200.5 200.5L344.37 61.57A200.0 200.0 0 0 0 335.62 53.04Z" fill="url(#w25)"/><path d="M200.5 200.5L338.17 55.43A200.0 200.0 0 0 0 329.06 47.29Z" fill="url(#w26)"/><path d="M200.5 200.5L331.71 49.56A200.0 200.0 0 0 0 322.25 41.83Z" fill="url(#w27)"/><path d="M200.5 200.5L325.00 43.98A200.0 200.0 0 0 0 315.22 36.67Z" fill="url(#w28)"/><path d="M200.5 200.5L318.06 38.70A200.0 200.0 0 0 0 307.96 31.82Z" fill="url(#w29)"/><path d="M200.5 200.5L310.89 33.72A200.0 200.0 0 0 0 300.50 27.29Z" fill="url(#w30)"/><path d="M200.5 200.5L303.51 29.07A200.0 200.0 0 0 0 292.85 23.10Z" fill="url(#w31)"/><path d="M200.5 200.5L295.93 24.74A200.0 200.0 0 0 0 285.02 19.24Z" fill="url(#w32)"/><path d="M200.5 200.5L288.17 20.74A200.0 200.0 0 0 0 277.04 15.72Z" fill="url(#w33)"/><path d="M200.5 200.5L280.25 17.09A200.0 200.0 0 0 0 268.90 12.56Z" fill="url(#w34)"/><path d="M200.5 200.5L272.17 13.78A200.0 200.0 0 0 0 260.64 9.76Z" fill="url(#w35)"/><path d="M200.5 200.5L263.96 10.84A200.0 200.0 0 0 0 252.26 7.31Z" fill="url(#w36)"/><path d="M200.5 200.5L255.63 8.25A200.0 200.0 0 0 0 243.79 5.24Z" fill="url(#w37)"/><path d="M200.5 200.5L247.19 6.03A200.0 200.0 0 0 0 240.37 4.52Z" fill="url(#w38)"/><path d="M200.5 200.5L243.79 5.24A200.0 200.0 0 0 0 236.95 3.85Z" fill="url(#w39)"/><path d="M200.5 200.5L240.37 4.52A200.0 200.0 0 0 0 233.51 3.24Z" fill="url(#w40)"/><path d="M200.5 200.5L236.95 3.85A200.0 200.0 0 0 0 230.06 2.70Z" fill="url(#w41)"/><path d="M200.5 200.5L233.51 3.24A200.0 200.0 0 0 0 226.61 2.21Z" fill="url(#w42)"/><path d="M200.5 200.5L230.06 2.70A200.0 200.0 0 0 0 223.14 1.79Z" fill="url(#w43)"/><path d="M200.5 200.5L226.61 2.21A200.0 200.0 0 0 0 219.67 1.42Z" fill="url(#w44)"/><path d="M200.5 200.5L223.14 1.79A200.0 200.0 0 0 0 216.19 1.12Z" fill="url(#w45)"/><path d="M200.5 200.5L219.67 1.42A200.0 200.0 0 0 0 212.71 0.87Z" fill="url(#w46)"/><path d="M200.5 200.5L216.19 1.12A200.0 200.0 0 0 0 209.22 0.69Z" fill="url(#w47)"/><path d="M200.5 200.5L212.71 0.87A200.0 200.0 0 0 0 205.74 0.57Z" fill="url(#w48)"/><path d="M200.5 200.5L209.22 0.69A200.0 200.0 0 0 0 202.25 0.51Z" fill="url(#w49)"/><path d="M200.5 200.5L205.74 0.57A200.0 200.0 0 0 0 198.75 0.51Z" fill="url(#w50)"/></g></defs><g clip-path="url(#wc)" shape-rendering="crispEdges"><use href="#q"/><use href="#q" transform="matrix(-1 0 0 1 401 0)"/><use href="#q" transform="matrix(1 0 0 -1 0 401)"/><use href="#q" transform="matrix(-1 0 0 -1 401 401)"/></g><g fill="none" stroke="#000" stroke-width="1" shape-rendering="crispEdges"><circle cx="200.5" cy="200.5" r="36.92"/><circle cx="200.5" cy="200.5" r="73.21"/><circle cx="200.5" cy="200.5" r="108.24"/><circle cx="200.5" cy="200.5" r="141.42"/><circle cx="200.5" cy="200.5" r="172.18"/><circle cx="200.5" cy="200.5" r="200.00"/><path d="M236.16 190.94L393.69 148.74M232.47 182.04L373.71 100.50M226.61 174.39L341.92 59.08M218.96 168.53L300.50 27.29M210.06 164.84L252.26 7.31M190.94 164.84L148.74 7.31M182.04 168.53L100.50 27.29M174.39 174.39L59.08 59.08M168.53 182.04L27.29 100.50M164.84 190.94L7.31 148.74M164.84 210.06L7.31 252.26M168.53 218.96L27.29 300.50M174.39 226.61L59.08 341.92M182.04 232.47L100.50 373.71M190.94 236.16L148.74 393.69M210.06 236.16L252.26 393.69M218.96 232.47L300.50 373.71M226.61 226.61L341.92 341.92M232.47 218.96L373.71 300.50M236.16 210.06L393.69 252.26M0 200.5L400 200.5M200.5 0L200.5 400"/></g></svg><div class="a" style="left:6px;top:593px;width:495px;height:52px;border:1px solid #a9a9a9;box-shadow:inset 1px 1px 0 #fff,1px 1px 0 #fff;box-sizing:border-box"></div><div class="t" style="left:13px;top:588.95px;padding:0 4px;background:#eeeeee;font-family:'Liberation Serif', serif;font-size:12px;font-weight:bold;color:#000;letter-spacing:0.1px">Color Wheel</div><div class="a" style="left:178px;top:607px;width:152px;height:25px;border:1px solid #7a8a99;background:#eeeeee;box-shadow:inset 1px 1px 0 #b8cfe5, inset -1px -1px 0 #b8cfe5"></div><div class="a" style="left:310px;top:608px;width:19px;height:23px;border-left:1px solid #7a8a99;background:linear-gradient(to bottom,#dde8f3 0%,#ffffff 30%,#dde8f3 60%,#b8cfe5 100%)"></div><svg class="a" style="left:314px;top:616px" width="12" height="7" viewBox="0 0 12 7"><path d="M0.5 0.5 L11 0.5 L5.75 6 Z" fill="#222"/></svg><div class="t" style="left:184px;top:613.84px;font-family:'Liberation Sans', sans-serif;font-size:12px;font-weight:bold;color:#222;letter-spacing:-0.12px">Absolute Value</div><div class="t" style="left:4px;top:650.69px;font-family:'Liberation Sans', sans-serif;font-size:11px;font-weight:normal;color:#1e1e1e;letter-spacing:-0.148px">Software developed in concert with Dr. Sinisa Pajevic Ph.D. from the NIH/CIT/DCB/MSCL group and</div><div class="t" style="left:4px;top:665.69px;font-family:'Liberation Sans', sans-serif;font-size:11px;font-weight:normal;color:#1e1e1e;letter-spacing:-0.148px">Dr. Lin-Ching Chang D.Sc., Dr. Carlo Pierpaoli MD Ph.D., and Lindsay Walker M.S.</div><div class="t" style="left:4px;top:680.69px;font-family:'Liberation Sans', sans-serif;font-size:11px;font-weight:normal;color:#1e1e1e;letter-spacing:-0.148px">from the NIH/NICHD/LIMB/STBB group</div><div class="t" style="left:4px;top:720.69px;font-family:'Liberation Sans', sans-serif;font-size:11px;font-weight:normal;color:#1e1e1e;letter-spacing:-0.148px">Color Schemes produced according to: S. Pajevic and C. Pierpaoli, Color Schemes to Represent the</div><div class="t" style="left:4px;top:735.69px;font-family:'Liberation Sans', sans-serif;font-size:11px;font-weight:normal;color:#1e1e1e;letter-spacing:-0.148px">Orientation of Anisotropic Tissues from Diffusion Tensor Data: Application to White Matter Fiber</div><div class="t" style="left:4px;top:750.69px;font-family:'Liberation Sans', sans-serif;font-size:11px;font-weight:normal;color:#1e1e1e;letter-spacing:-0.148px">Tract Mapping in the Human Brain, Magnetic Resonance in Medicine, vol. 42, no. 3, pp. 526-540, 1999</div><div class="t" style="left:4px;top:775.69px;font-family:'Liberation Sans', sans-serif;font-size:11px;font-weight:normal;color:#0000ff;letter-spacing:-0.148px;text-decoration:underline">Download Paper</div><div class="a" style="left:506px;top:93px;width:311px;height:835px;border:1px solid #a9a9a9;box-shadow:inset 1px 1px 0 #fff,1px 1px 0 #fff;box-sizing:border-box"></div><div class="t" style="left:512px;top:88.95px;padding:0 4px;background:#eeeeee;font-family:'Liberation Serif', serif;font-size:12px;font-weight:bold;color:#000;letter-spacing:0.08px">Heuristic Parameters</div><div class="a" style="left:512px;top:115px;width:299px;height:61px;border:1px solid #a9a9a9;box-shadow:inset 1px 1px 0 #fff,1px 1px 0 #fff;box-sizing:border-box"></div><div class="t" style="left:518px;top:110.95px;padding:0 4px;background:#eeeeee;font-family:'Liberation Serif', serif;font-size:12px;font-weight:bold;color:#000;">Anisotropy Max</div><div class="a" style="left:523px;top:134px;width:185px;height:6px;border:1px solid #7a8a99;background:linear-gradient(to bottom,#a9bfd6 0,#a9bfd6 1px,#f2f2f2 1px,#f2f2f2 100%)"></div><div class="a" style="left:523px;top:134px;width:53px;height:6px;border:1px solid #6382bf;border-right:none;background:linear-gradient(to bottom,#ffffff 0,#ffffff 1px,#d2e2f2 1px,#a9bed4 100%)"></div><div class="a" style="left:523px;top:149px;width:1px;height:6px;background:#a3b8cc"></div><div class="a" style="left:542px;top:149px;width:1px;height:6px;background:#a3b8cc"></div><div class="a" style="left:560px;top:149px;width:1px;height:6px;background:#a3b8cc"></div><div class="a" style="left:579px;top:149px;width:1px;height:6px;background:#a3b8cc"></div><div class="a" style="left:597px;top:149px;width:1px;height:6px;background:#a3b8cc"></div><div class="a" style="left:616px;top:149px;width:1px;height:6px;background:#a3b8cc"></div><div class="a" style="left:634px;top:149px;width:1px;height:6px;background:#a3b8cc"></div><div class="a" style="left:653px;top:149px;width:1px;height:6px;background:#a3b8cc"></div><div class="a" style="left:671px;top:149px;width:1px;height:6px;background:#a3b8cc"></div><div class="a" style="left:690px;top:149px;width:1px;height:6px;background:#a3b8cc"></div><div class="a" style="left:708px;top:149px;width:1px;height:6px;background:#a3b8cc"></div><svg class="a" style="left:569px;top:129px" width="15" height="16" viewBox="0 0 15 16"><defs><linearGradient id="tg" x1="0" y1="0" x2="0" y2="1"><stop offset="0" stop-color="#c4daf2"/><stop offset="0.35" stop-color="#ffffff"/><stop offset="0.6" stop-color="#ffffff"/><stop offset="1" stop-color="#aecbe8"/></linearGradient></defs>
<path d="M1.5 0.5 L13.5 0.5 L14.5 1.5 L14.5 8.5 L7.5 15.5 L0.5 8.5 L0.5 1.5 Z" fill="url(#tg)" stroke="#333" stroke-width="1"/></svg><div class="t" style="left:515.3px;top:158.53px;font-family:'Liberation Serif', serif;font-size:12.5px;font-weight:normal;color:#000;">0.0</div><div class="t" style="left:700.3px;top:158.53px;font-family:'Liberation Serif', serif;font-size:12.5px;font-weight:normal;color:#000;">1.0</div><div class="a" style="left:716px;top:129px;width:92px;height:20px;background:#fff"></div><div class="a" style="left:716px;top:129px;width:91px;height:19px;border:1px solid #7a8a99;background:#fff"></div><div class="t" style="left:719px;top:133.84px;font-family:'Liberation Sans', sans-serif;font-size:12px;font-weight:normal;color:#2a2a2a;">0.285</div><div class="a" style="left:512px;top:187px;width:299px;height:61px;border:1px solid #a9a9a9;box-shadow:inset 1px 1px 0 #fff,1px 1px 0 #fff;box-sizing:border-box"></div><div class="t" style="left:518px;top:182.95px;padding:0 4px;background:#eeeeee;font-family:'Liberation Serif', serif;font-size:12px;font-weight:bold;color:#000;">Anisotropy Min</div><div class="a" style="left:523px;top:206px;width:185px;height:6px;border:1px solid #7a8a99;background:linear-gradient(to bottom,#a9bfd6 0,#a9bfd6 1px,#f2f2f2 1px,#f2f2f2 100%)"></div><div class="a" style="left:523px;top:206px;width:8px;height:6px;border:1px solid #6382bf;border-right:none;background:linear-gradient(to bottom,#ffffff 0,#ffffff 1px,#d2e2f2 1px,#a9bed4 100%)"></div><div class="a" style="left:523px;top:221px;width:1px;height:6px;background:#a3b8cc"></div><div class="a" style="left:542px;top:221px;width:1px;height:6px;background:#a3b8cc"></div><div class="a" style="left:560px;top:221px;width:1px;height:6px;background:#a3b8cc"></div><div class="a" style="left:579px;top:221px;width:1px;height:6px;background:#a3b8cc"></div><div class="a" style="left:597px;top:221px;width:1px;height:6px;background:#a3b8cc"></div><div class="a" style="left:616px;top:221px;width:1px;height:6px;background:#a3b8cc"></div><div class="a" style="left:634px;top:221px;width:1px;height:6px;background:#a3b8cc"></div><div class="a" style="left:653px;top:221px;width:1px;height:6px;background:#a3b8cc"></div><div class="a" style="left:671px;top:221px;width:1px;height:6px;background:#a3b8cc"></div><div class="a" style="left:690px;top:221px;width:1px;height:6px;background:#a3b8cc"></div><div class="a" style="left:708px;top:221px;width:1px;height:6px;background:#a3b8cc"></div><svg class="a" style="left:524px;top:201px" width="15" height="16" viewBox="0 0 15 16"><defs><linearGradient id="tg" x1="0" y1="0" x2="0" y2="1"><stop offset="0" stop-color="#c4daf2"/><stop offset="0.35" stop-color="#ffffff"/><stop offset="0.6" stop-color="#ffffff"/><stop offset="1" stop-color="#aecbe8"/></linearGradient></defs>
<path d="M1.5 0.5 L13.5 0.5 L14.5 1.5 L14.5 8.5 L7.5 15.5 L0.5 8.5 L0.5 1.5 Z" fill="url(#tg)" stroke="#333" stroke-width="1"/></svg><div class="t" style="left:515.3px;top:230.53px;font-family:'Liberation Serif', serif;font-size:12.5px;font-weight:normal;color:#000;">0.0</div><div class="t" style="left:700.3px;top:230.53px;font-family:'Liberation Serif', serif;font-size:12.5px;font-weight:normal;color:#000;">1.0</div><div class="a" style="left:716px;top:204px;width:92px;height:20px;background:#fff"></div><div class="a" style="left:716px;top:204px;width:91px;height:19px;border:1px solid #7a8a99;background:#fff"></div><div class="t" style="left:719px;top:208.84px;font-family:'Liberation Sans', sans-serif;font-size:12px;font-weight:normal;color:#2a2a2a;">0.043</div><div class="a" style="left:512px;top:259px;width:299px;height:61px;border:1px solid #a9a9a9;box-shadow:inset 1px 1px 0 #fff,1px 1px 0 #fff;box-sizing:border-box"></div><div class="t" style="left:518px;top:254.95px;padding:0 4px;background:#eeeeee;font-family:'Liberation Serif', serif;font-size:12px;font-weight:bold;color:#000;">Gamma Correction</div><div class="a" style="left:523px;top:278px;width:185px;height:6px;border:1px solid #7a8a99;background:linear-gradient(to bottom,#a9bfd6 0,#a9bfd6 1px,#f2f2f2 1px,#f2f2f2 100%)"></div><div class="a" style="left:523px;top:278px;width:49px;height:6px;border:1px solid #6382bf;border-right:none;background:linear-gradient(to bottom,#ffffff 0,#ffffff 1px,#d2e2f2 1px,#a9bed4 100%)"></div><div class="a" style="left:523px;top:293px;width:1px;height:6px;background:#a3b8cc"></div><div class="a" style="left:554px;top:293px;width:1px;height:6px;background:#a3b8cc"></div><div class="a" style="left:585px;top:293px;width:1px;height:6px;background:#a3b8cc"></div><div class="a" style="left:616px;top:293px;width:1px;height:6px;background:#a3b8cc"></div><div class="a" style="left:646px;top:293px;width:1px;height:6px;background:#a3b8cc"></div><div class="a" style="left:677px;top:293px;width:1px;height:6px;background:#a3b8cc"></div><div class="a" style="left:708px;top:293px;width:1px;height:6px;background:#a3b8cc"></div><svg class="a" style="left:565px;top:273px" width="15" height="16" viewBox="0 0 15 16"><defs><linearGradient id="tg" x1="0" y1="0" x2="0" y2="1"><stop offset="0" stop-color="#c4daf2"/><stop offset="0.35" stop-color="#ffffff"/><stop offset="0.6" stop-color="#ffffff"/><stop offset="1" stop-color="#aecbe8"/></linearGradient></defs>
<path d="M1.5 0.5 L13.5 0.5 L14.5 1.5 L14.5 8.5 L7.5 15.5 L0.5 8.5 L0.5 1.5 Z" fill="url(#tg)" stroke="#333" stroke-width="1"/></svg><div class="t" style="left:515.3px;top:302.53px;font-family:'Liberation Serif', serif;font-size:12.5px;font-weight:normal;color:#000;">1</div><div class="t" style="left:709.7px;top:302.53px;font-family:'Liberation Serif', serif;font-size:12.5px;font-weight:normal;color:#000;">4</div><div class="a" style="left:716px;top:276px;width:92px;height:20px;background:#fff"></div><div class="a" style="left:716px;top:276px;width:91px;height:19px;border:1px solid #7a8a99;background:#fff"></div><div class="t" style="left:719px;top:280.84px;font-family:'Liberation Sans', sans-serif;font-size:12px;font-weight:normal;color:#2a2a2a;">1.8</div><div class="a" style="left:512px;top:331px;width:299px;height:61px;border:1px solid #a9a9a9;box-shadow:inset 1px 1px 0 #fff,1px 1px 0 #fff;box-sizing:border-box"></div><div class="t" style="left:518px;top:326.95px;padding:0 4px;background:#eeeeee;font-family:'Liberation Serif', serif;font-size:12px;font-weight:bold;color:#000;">pB Sat. Blue</div><div class="a" style="left:523px;top:350px;width:185px;height:6px;border:1px solid #7a8a99;background:linear-gradient(to bottom,#a9bfd6 0,#a9bfd6 1px,#f2f2f2 1px,#f2f2f2 100%)"></div><div class="a" style="left:523px;top:350px;width:130px;height:6px;border:1px solid #6382bf;border-right:none;background:linear-gradient(to bottom,#ffffff 0,#ffffff 1px,#d2e2f2 1px,#a9bed4 100%)"></div><div class="a" style="left:523px;top:365px;width:1px;height:6px;background:#a3b8cc"></div><div class="a" style="left:542px;top:365px;width:1px;height:6px;background:#a3b8cc"></div><div class="a" style="left:560px;top:365px;width:1px;height:6px;background:#a3b8cc"></div><div class="a" style="left:579px;top:365px;width:1px;height:6px;background:#a3b8cc"></div><div class="a" style="left:597px;top:365px;width:1px;height:6px;background:#a3b8cc"></div><div class="a" style="left:616px;top:365px;width:1px;height:6px;background:#a3b8cc"></div><div class="a" style="left:634px;top:365px;width:1px;height:6px;background:#a3b8cc"></div><div class="a" style="left:653px;top:365px;width:1px;height:6px;background:#a3b8cc"></div><div class="a" style="left:671px;top:365px;width:1px;height:6px;background:#a3b8cc"></div><div class="a" style="left:690px;top:365px;width:1px;height:6px;background:#a3b8cc"></div><div class="a" style="left:708px;top:365px;width:1px;height:6px;background:#a3b8cc"></div><svg class="a" style="left:646px;top:345px" width="15" height="16" viewBox="0 0 15 16"><defs><linearGradient id="tg" x1="0" y1="0" x2="0" y2="1"><stop offset="0" stop-color="#c4daf2"/><stop offset="0.35" stop-color="#ffffff"/><stop offset="0.6" stop-color="#ffffff"/><stop offset="1" stop-color="#aecbe8"/></linearGradient></defs>
<path d="M1.5 0.5 L13.5 0.5 L14.5 1.5 L14.5 8.5 L7.5 15.5 L0.5 8.5 L0.5 1.5 Z" fill="url(#tg)" stroke="#333" stroke-width="1"/></svg><div class="t" style="left:515.3px;top:374.53px;font-family:'Liberation Serif', serif;font-size:12.5px;font-weight:normal;color:#000;">0.0</div><div class="t" style="left:700.3px;top:374.53px;font-family:'Liberation Serif', serif;font-size:12.5px;font-weight:normal;color:#000;">0.5</div><div class="a" style="left:716px;top:348px;width:92px;height:20px;background:#fff"></div><div class="a" style="left:716px;top:348px;width:91px;height:19px;border:1px solid #7a8a99;background:#fff"></div><div class="t" style="left:719px;top:352.84px;font-family:'Liberation Sans', sans-serif;font-size:12px;font-weight:normal;color:#2a2a2a;">0.35</div><div class="a" style="left:512px;top:403px;width:299px;height:61px;border:1px solid #a9a9a9;box-shadow:inset 1px 1px 0 #fff,1px 1px 0 #fff;box-sizing:border-box"></div><div class="t" style="left:518px;top:398.95px;padding:0 4px;background:#eeeeee;font-family:'Liberation Serif', serif;font-size:12px;font-weight:bold;color:#000;">pG Dim Green</div><div class="a" style="left:523px;top:422px;width:185px;height:6px;border:1px solid #7a8a99;background:linear-gradient(to bottom,#a9bfd6 0,#a9bfd6 1px,#f2f2f2 1px,#f2f2f2 100%)"></div><div class="a" style="left:523px;top:422px;width:49px;height:6px;border:1px solid #6382bf;border-right:none;background:linear-gradient(to bottom,#ffffff 0,#ffffff 1px,#d2e2f2 1px,#a9bed4 100%)"></div><div class="a" style="left:523px;top:437px;width:1px;height:6px;background:#a3b8cc"></div><div class="a" style="left:554px;top:437px;width:1px;height:6px;background:#a3b8cc"></div><div class="a" style="left:585px;top:437px;width:1px;height:6px;background:#a3b8cc"></div><div class="a" style="left:616px;top:437px;width:1px;height:6px;background:#a3b8cc"></div><div class="a" style="left:646px;top:437px;width:1px;height:6px;background:#a3b8cc"></div><div class="a" style="left:677px;top:437px;width:1px;height:6px;background:#a3b8cc"></div><div class="a" style="left:708px;top:437px;width:1px;height:6px;background:#a3b8cc"></div><svg class="a" style="left:565px;top:417px" width="15" height="16" viewBox="0 0 15 16"><defs><linearGradient id="tg" x1="0" y1="0" x2="0" y2="1"><stop offset="0" stop-color="#c4daf2"/><stop offset="0.35" stop-color="#ffffff"/><stop offset="0.6" stop-color="#ffffff"/><stop offset="1" stop-color="#aecbe8"/></linearGradient></defs>
<path d="M1.5 0.5 L13.5 0.5 L14.5 1.5 L14.5 8.5 L7.5 15.5 L0.5 8.5 L0.5 1.5 Z" fill="url(#tg)" stroke="#333" stroke-width="1"/></svg><div class="t" style="left:515.3px;top:446.53px;font-family:'Liberation Serif', serif;font-size:12.5px;font-weight:normal;color:#000;">0.0</div><div class="t" style="left:700.3px;top:446.53px;font-family:'Liberation Serif', serif;font-size:12.5px;font-weight:normal;color:#000;">3.0</div><div class="a" style="left:716px;top:420px;width:92px;height:20px;background:#fff"></div><div class="a" style="left:716px;top:420px;width:91px;height:19px;border:1px solid #7a8a99;background:#fff"></div><div class="t" style="left:719px;top:424.84px;font-family:'Liberation Sans', sans-serif;font-size:12px;font-weight:normal;color:#2a2a2a;">0.8</div><div class="a" style="left:512px;top:475px;width:299px;height:61px;border:1px solid #a9a9a9;box-shadow:inset 1px 1px 0 #fff,1px 1px 0 #fff;box-sizing:border-box"></div><div class="t" style="left:518px;top:470.95px;padding:0 4px;background:#eeeeee;font-family:'Liberation Serif', serif;font-size:12px;font-weight:bold;color:#000;">pC Color Range</div><div class="a" style="left:523px;top:494px;width:185px;height:6px;border:1px solid #7a8a99;background:linear-gradient(to bottom,#a9bfd6 0,#a9bfd6 1px,#f2f2f2 1px,#f2f2f2 100%)"></div><div class="a" style="left:523px;top:494px;width:130px;height:6px;border:1px solid #6382bf;border-right:none;background:linear-gradient(to bottom,#ffffff 0,#ffffff 1px,#d2e2f2 1px,#a9bed4 100%)"></div><div class="a" style="left:523px;top:509px;width:1px;height:6px;background:#a3b8cc"></div><div class="a" style="left:542px;top:509px;width:1px;height:6px;background:#a3b8cc"></div><div class="a" style="left:560px;top:509px;width:1px;height:6px;background:#a3b8cc"></div><div class="a" style="left:579px;top:509px;width:1px;height:6px;background:#a3b8cc"></div><div class="a" style="left:597px;top:509px;width:1px;height:6px;background:#a3b8cc"></div><div class="a" style="left:616px;top:509px;width:1px;height:6px;background:#a3b8cc"></div><div class="a" style="left:634px;top:509px;width:1px;height:6px;background:#a3b8cc"></div><div class="a" style="left:653px;top:509px;width:1px;height:6px;background:#a3b8cc"></div><div class="a" style="left:671px;top:509px;width:1px;height:6px;background:#a3b8cc"></div><div class="a" style="left:690px;top:509px;width:1px;height:6px;background:#a3b8cc"></div><div class="a" style="left:708px;top:509px;width:1px;height:6px;background:#a3b8cc"></div><svg class="a" style="left:646px;top:489px" width="15" height="16" viewBox="0 0 15 16"><defs><linearGradient id="tg" x1="0" y1="0" x2="0" y2="1"><stop offset="0" stop-color="#c4daf2"/><stop offset="0.35" stop-color="#ffffff"/><stop offset="0.6" stop-color="#ffffff"/><stop offset="1" stop-color="#aecbe8"/></linearGradient></defs>
<path d="M1.5 0.5 L13.5 0.5 L14.5 1.5 L14.5 8.5 L7.5 15.5 L0.5 8.5 L0.5 1.5 Z" fill="url(#tg)" stroke="#333" stroke-width="1"/></svg><div class="t" style="left:515.3px;top:518.53px;font-family:'Liberation Serif', serif;font-size:12.5px;font-weight:normal;color:#000;">0.0</div><div class="t" style="left:700.3px;top:518.53px;font-family:'Liberation Serif', serif;font-size:12.5px;font-weight:normal;color:#000;">1.0</div><div class="a" style="left:716px;top:492px;width:92px;height:20px;background:#fff"></div><div class="a" style="left:716px;top:492px;width:91px;height:19px;border:1px solid #7a8a99;background:#fff"></div><div class="t" style="left:719px;top:496.84px;font-family:'Liberation Sans', sans-serif;font-size:12px;font-weight:normal;color:#2a2a2a;">0.7</div><div class="a" style="left:512px;top:547px;width:299px;height:61px;border:1px solid #a9a9a9;box-shadow:inset 1px 1px 0 #fff,1px 1px 0 #fff;box-sizing:border-box"></div><div class="t" style="left:518px;top:542.95px;padding:0 4px;background:#eeeeee;font-family:'Liberation Serif', serif;font-size:12px;font-weight:bold;color:#000;">pS Sat vs Theta</div><div class="a" style="left:523px;top:566px;width:185px;height:6px;border:1px solid #b8cfe5;background:#f0f0f0"></div><div class="a" style="left:523px;top:581px;width:1px;height:6px;background:#a3b8cc"></div><div class="a" style="left:542px;top:581px;width:1px;height:6px;background:#a3b8cc"></div><div class="a" style="left:560px;top:581px;width:1px;height:6px;background:#a3b8cc"></div><div class="a" style="left:579px;top:581px;width:1px;height:6px;background:#a3b8cc"></div><div class="a" style="left:597px;top:581px;width:1px;height:6px;background:#a3b8cc"></div><div class="a" style="left:616px;top:581px;width:1px;height:6px;background:#a3b8cc"></div><div class="a" style="left:634px;top:581px;width:1px;height:6px;background:#a3b8cc"></div><div class="a" style="left:653px;top:581px;width:1px;height:6px;background:#a3b8cc"></div><div class="a" style="left:671px;top:581px;width:1px;height:6px;background:#a3b8cc"></div><div class="a" style="left:690px;top:581px;width:1px;height:6px;background:#a3b8cc"></div><div class="a" style="left:708px;top:581px;width:1px;height:6px;background:#a3b8cc"></div><svg class="a" style="left:609px;top:561px" width="15" height="16" viewBox="0 0 15 16"><defs><linearGradient id="tg" x1="0" y1="0" x2="0" y2="1"><stop offset="0" stop-color="#c4daf2"/><stop offset="0.35" stop-color="#ffffff"/><stop offset="0.6" stop-color="#ffffff"/><stop offset="1" stop-color="#aecbe8"/></linearGradient></defs>
<path d="M1.5 0.5 L13.5 0.5 L14.5 1.5 L14.5 8.5 L7.5 15.5 L0.5 8.5 L0.5 1.5 Z" fill="url(#tg)" stroke="#8a9aa9" stroke-width="1"/></svg><div class="t" style="left:515.3px;top:590.53px;font-family:'Liberation Serif', serif;font-size:12.5px;font-weight:normal;color:#000;">0.0</div><div class="t" style="left:700.3px;top:590.53px;font-family:'Liberation Serif', serif;font-size:12.5px;font-weight:normal;color:#000;">1.0</div><div class="a" style="left:716px;top:564px;width:92px;height:20px;border:1px solid #b8cfe5;background:#c0c0c0"></div><div class="a" style="left:512px;top:619px;width:299px;height:61px;border:1px solid #a9a9a9;box-shadow:inset 1px 1px 0 #fff,1px 1px 0 #fff;box-sizing:border-box"></div><div class="t" style="left:518px;top:614.95px;padding:0 4px;background:#eeeeee;font-family:'Liberation Serif', serif;font-size:12px;font-weight:bold;color:#000;">Adjust Exp</div><div class="a" style="left:523px;top:638px;width:185px;height:6px;border:1px solid #7a8a99;background:linear-gradient(to bottom,#a9bfd6 0,#a9bfd6 1px,#f2f2f2 1px,#f2f2f2 100%)"></div><div class="a" style="left:523px;top:638px;width:93px;height:6px;border:1px solid #6382bf;border-right:none;background:linear-gradient(to bottom,#ffffff 0,#ffffff 1px,#d2e2f2 1px,#a9bed4 100%)"></div><div class="a" style="left:523px;top:653px;width:1px;height:6px;background:#a3b8cc"></div><div class="a" style="left:542px;top:653px;width:1px;height:6px;background:#a3b8cc"></div><div class="a" style="left:560px;top:653px;width:1px;height:6px;background:#a3b8cc"></div><div class="a" style="left:579px;top:653px;width:1px;height:6px;background:#a3b8cc"></div><div class="a" style="left:597px;top:653px;width:1px;height:6px;background:#a3b8cc"></div><div class="a" style="left:616px;top:653px;width:1px;height:6px;background:#a3b8cc"></div><div class="a" style="left:634px;top:653px;width:1px;height:6px;background:#a3b8cc"></div><div class="a" style="left:653px;top:653px;width:1px;height:6px;background:#a3b8cc"></div><div class="a" style="left:671px;top:653px;width:1px;height:6px;background:#a3b8cc"></div><div class="a" style="left:690px;top:653px;width:1px;height:6px;background:#a3b8cc"></div><div class="a" style="left:708px;top:653px;width:1px;height:6px;background:#a3b8cc"></div><svg class="a" style="left:609px;top:633px" width="15" height="16" viewBox="0 0 15 16"><defs><linearGradient id="tg" x1="0" y1="0" x2="0" y2="1"><stop offset="0" stop-color="#c4daf2"/><stop offset="0.35" stop-color="#ffffff"/><stop offset="0.6" stop-color="#ffffff"/><stop offset="1" stop-color="#aecbe8"/></linearGradient></defs>
<path d="M1.5 0.5 L13.5 0.5 L14.5 1.5 L14.5 8.5 L7.5 15.5 L0.5 8.5 L0.5 1.5 Z" fill="url(#tg)" stroke="#333" stroke-width="1"/></svg><div class="t" style="left:515.3px;top:662.53px;font-family:'Liberation Serif', serif;font-size:12.5px;font-weight:normal;color:#000;">0.0</div><div class="t" style="left:700.3px;top:662.53px;font-family:'Liberation Serif', serif;font-size:12.5px;font-weight:normal;color:#000;">1.0</div><div class="a" style="left:716px;top:636px;width:92px;height:20px;background:#fff"></div><div class="a" style="left:716px;top:636px;width:91px;height:19px;border:1px solid #7a8a99;background:#fff"></div><div class="t" style="left:719px;top:640.84px;font-family:'Liberation Sans', sans-serif;font-size:12px;font-weight:normal;color:#2a2a2a;">0.5</div><div class="a" style="left:512px;top:691px;width:299px;height:61px;border:1px solid #a9a9a9;box-shadow:inset 1px 1px 0 #fff,1px 1px 0 #fff;box-sizing:border-box"></div><div class="t" style="left:518px;top:686.95px;padding:0 4px;background:#eeeeee;font-family:'Liberation Serif', serif;font-size:12px;font-weight:bold;color:#000;">Stevens Beta</div><div class="a" style="left:523px;top:710px;width:185px;height:6px;border:1px solid #7a8a99;background:linear-gradient(to bottom,#a9bfd6 0,#a9bfd6 1px,#f2f2f2 1px,#f2f2f2 100%)"></div><div class="a" style="left:523px;top:710px;width:62px;height:6px;border:1px solid #6382bf;border-right:none;background:linear-gradient(to bottom,#ffffff 0,#ffffff 1px,#d2e2f2 1px,#a9bed4 100%)"></div><div class="a" style="left:523px;top:725px;width:1px;height:6px;background:#a3b8cc"></div><div class="a" style="left:542px;top:725px;width:1px;height:6px;background:#a3b8cc"></div><div class="a" style="left:560px;top:725px;width:1px;height:6px;background:#a3b8cc"></div><div class="a" style="left:579px;top:725px;width:1px;height:6px;background:#a3b8cc"></div><div class="a" style="left:597px;top:725px;width:1px;height:6px;background:#a3b8cc"></div><div class="a" style="left:616px;top:725px;width:1px;height:6px;background:#a3b8cc"></div><div class="a" style="left:634px;top:725px;width:1px;height:6px;background:#a3b8cc"></div><div class="a" style="left:653px;top:725px;width:1px;height:6px;background:#a3b8cc"></div><div class="a" style="left:671px;top:725px;width:1px;height:6px;background:#a3b8cc"></div><div class="a" style="left:690px;top:725px;width:1px;height:6px;background:#a3b8cc"></div><div class="a" style="left:708px;top:725px;width:1px;height:6px;background:#a3b8cc"></div><svg class="a" style="left:578px;top:705px" width="15" height="16" viewBox="0 0 15 16"><defs><linearGradient id="tg" x1="0" y1="0" x2="0" y2="1"><stop offset="0" stop-color="#c4daf2"/><stop offset="0.35" stop-color="#ffffff"/><stop offset="0.6" stop-color="#ffffff"/><stop offset="1" stop-color="#aecbe8"/></linearGradient></defs>
<path d="M1.5 0.5 L13.5 0.5 L14.5 1.5 L14.5 8.5 L7.5 15.5 L0.5 8.5 L0.5 1.5 Z" fill="url(#tg)" stroke="#333" stroke-width="1"/></svg><div class="t" style="left:515.3px;top:734.53px;font-family:'Liberation Serif', serif;font-size:12.5px;font-weight:normal;color:#000;">0.3</div><div class="t" style="left:700.3px;top:734.53px;font-family:'Liberation Serif', serif;font-size:12.5px;font-weight:normal;color:#000;">0.6</div><div class="a" style="left:716px;top:708px;width:92px;height:20px;background:#fff"></div><div class="a" style="left:716px;top:708px;width:91px;height:19px;border:1px solid #7a8a99;background:#fff"></div><div class="t" style="left:719px;top:712.84px;font-family:'Liberation Sans', sans-serif;font-size:12px;font-weight:normal;color:#2a2a2a;">0.4</div><div class="a" style="left:512px;top:763px;width:299px;height:41px;border:1px solid #a9a9a9;box-shadow:inset 1px 1px 0 #fff,1px 1px 0 #fff;box-sizing:border-box"></div><div class="t" style="left:518px;top:758.95px;padding:0 4px;background:#eeeeee;font-family:'Liberation Serif', serif;font-size:12px;font-weight:bold;color:#000;">Truncate / Multiply</div><svg class="a" style="left:563px;top:782px" width="14" height="14" viewBox="0 0 14 14"><defs><linearGradient id="rg" x1="0" y1="0" x2="0" y2="1"><stop offset="0" stop-color="#ffffff"/><stop offset="1" stop-color="#c4d6ea"/></linearGradient></defs>
<circle cx="7" cy="7" r="6" fill="url(#rg)" stroke="#7a8a99" stroke-width="1"/></svg><div class="t" style="left:581px;top:783.84px;font-family:'Liberation Sans', sans-serif;font-size:12px;font-weight:bold;color:#222;">Truncate</div><svg class="a" style="left:699px;top:782px" width="14" height="14" viewBox="0 0 14 14"><defs><linearGradient id="rg" x1="0" y1="0" x2="0" y2="1"><stop offset="0" stop-color="#ffffff"/><stop offset="1" stop-color="#c4d6ea"/></linearGradient></defs>
<circle cx="7" cy="7" r="6" fill="url(#rg)" stroke="#7a8a99" stroke-width="1"/><circle cx="7" cy="7" r="2.6" fill="#222"/></svg><div class="t" style="left:717px;top:783.84px;font-family:'Liberation Sans', sans-serif;font-size:12px;font-weight:bold;color:#222;">Multiply</div><div class="a" style="left:512px;top:816px;width:299px;height:47px;border:1px solid #a9a9a9;box-shadow:inset 1px 1px 0 #fff,1px 1px 0 #fff;box-sizing:border-box"></div><div class="t" style="left:518px;top:811.95px;padding:0 4px;background:#eeeeee;font-family:'Liberation Serif', serif;font-size:12px;font-weight:bold;color:#000;">Save Params / Load Params</div><div class="btn" style="left:570px;top:829px;width:62px;height:26px;"></div><div class="t" style="left:587px;top:836.84px;font-family:'Liberation Sans', sans-serif;font-size:12px;font-weight:bold;color:#222;">Save</div><div class="btn" style="left:692px;top:829px;width:62px;height:26px;"></div><div class="t" style="left:708.5px;top:836.84px;font-family:'Liberation Sans', sans-serif;font-size:12px;font-weight:bold;color:#222;">Load</div><div class="a" style="left:512px;top:875px;width:299px;height:47px;border:1px solid #a9a9a9;box-shadow:inset 1px 1px 0 #fff,1px 1px 0 #fff;box-sizing:border-box"></div><div class="t" style="left:518px;top:870.95px;padding:0 4px;background:#eeeeee;font-family:'Liberation Serif', serif;font-size:12px;font-weight:bold;color:#000;">Restore Default Params</div><div class="btn" style="left:622px;top:888px;width:80px;height:26px;"></div><div class="t" style="left:639px;top:895.84px;font-family:'Liberation Sans', sans-serif;font-size:12px;font-weight:bold;color:#222;">Restore</div><div class="a" style="left:820px;top:85px;width:499px;height:499px;border:1px solid #a9a9a9;box-shadow:inset 1px 1px 0 #fff,1px 1px 0 #fff;box-sizing:border-box"></div><div class="a" style="left:1006px;top:256px;width:128px;height:157px;background:#000"></div><svg class="a" style="left:1006px;top:256px" width="128" height="157" viewBox="0 0 128 157"><defs><filter id="bb" x="-10%" y="-10%" width="120%" height="120%"><feGaussianBlur stdDeviation="1.0"/></filter><filter id="bu" x="-50%" y="-50%" width="200%" height="200%"><feGaussianBlur stdDeviation="4"/></filter></defs><rect width="128" height="157" fill="#000"/><g filter="url(#bu)" opacity="0.55"><ellipse cx="50" cy="44" rx="10" ry="14" fill="#40c080"/><ellipse cx="76" cy="40" rx="10" ry="14" fill="#60c060"/><ellipse cx="38" cy="78" rx="9" ry="20" fill="#a05070"/><ellipse cx="90" cy="76" rx="9" ry="20" fill="#a06060"/><ellipse cx="48" cy="108" rx="10" ry="12" fill="#5080a0"/><ellipse cx="82" cy="108" rx="10" ry="12" fill="#60a080"/><ellipse cx="64" cy="72" rx="10" ry="22" fill="#a06090"/></g><g filter="url(#bb)"><ellipse cx="48.83787014416555" cy="113.15380842403633" rx="1.3" ry="1.3" fill="#3a6a40" opacity="0.7" transform="rotate(0 48.83787014416555 113.15380842403633)"/><ellipse cx="96.9266631125171" cy="94.35140014270287" rx="1.3" ry="1.3" fill="#34507a" opacity="0.7" transform="rotate(0 96.9266631125171 94.35140014270287)"/><ellipse cx="29.854799698201845" cy="47.085577418901494" rx="1.3" ry="1.3" fill="#6a3048" opacity="0.7" transform="rotate(0 29.854799698201845 47.085577418901494)"/><ellipse cx="98.92994306907762" cy="84.11003175434548" rx="1.3" ry="1.3" fill="#3a6a40" opacity="0.7" transform="rotate(0 98.92994306907762 84.11003175434548)"/><ellipse cx="66.15577111995809" cy="121.63317993324696" rx="1.3" ry="1.3" fill="#3a6a40" opacity="0.7" transform="rotate(0 66.15577111995809 121.63317993324696)"/><ellipse cx="79.64386130481041" cy="33.46305029872615" rx="1.3" ry="1.3" fill="#6a3048" opacity="0.7" transform="rotate(0 79.64386130481041 33.46305029872615)"/><ellipse cx="38.77967724247125" cy="37.13295541965697" rx="1.3" ry="1.3" fill="#3a6a40" opacity="0.7" transform="rotate(0 38.77967724247125 37.13295541965697)"/><ellipse cx="32.44683919254764" cy="50.99720029662652" rx="1.3" ry="1.3" fill="#6a3048" opacity="0.7" transform="rotate(0 32.44683919254764 50.99720029662652)"/><ellipse cx="101.32318565678762" cy="87.9023369711025" rx="1.3" ry="1.3" fill="#34507a" opacity="0.7" transform="rotate(0 101.32318565678762 87.9023369711025)"/><ellipse cx="31.94182735790443" cy="96.65209596219171" rx="1.3" ry="1.3" fill="#205a50" opacity="0.7" transform="rotate(0 31.94182735790443 96.65209596219171)"/><ellipse cx="50.10603998441934" cy="120.82496311522428" rx="1.3" ry="1.3" fill="#6a3048" opacity="0.7" transform="rotate(0 50.10603998441934 120.82496311522428)"/><ellipse cx="93.44093170376257" cy="102.5025127926765" rx="1.3" ry="1.3" fill="#6a3048" opacity="0.7" transform="rotate(0 93.44093170376257 102.5025127926765)"/><ellipse cx="38.44653903668721" cy="107.98412891268208" rx="1.3" ry="1.3" fill="#3a6a40" opacity="0.7" transform="rotate(0 38.44653903668721 107.98412891268208)"/><ellipse cx="29.748876361668977" cy="53.57463133667083" rx="1.3" ry="1.3" fill="#5a5a20" opacity="0.7" transform="rotate(0 29.748876361668977 53.57463133667083)"/><ellipse cx="48.80524118509434" cy="29.9344856674106" rx="1.3" ry="1.3" fill="#34507a" opacity="0.7" transform="rotate(0 48.80524118509434 29.9344856674106)"/><ellipse cx="25.469008909272674" cy="84.20928137891612" rx="1.3" ry="1.3" fill="#34507a" opacity="0.7" transform="rotate(0 25.469008909272674 84.20928137891612)"/><ellipse cx="52.15045526517824" cy="121.56342193269751" rx="1.3" ry="1.3" fill="#6a3048" opacity="0.7" transform="rotate(0 52.15045526517824 121.56342193269751)"/><ellipse cx="94.4388656037005" cy="95.7885546346053" rx="1.3" ry="1.3" fill="#5a5a20" opacity="0.7" transform="rotate(0 94.4388656037005 95.7885546346053)"/><ellipse cx="90.93006658132072" cy="37.379261248193004" rx="1.3" ry="1.3" fill="#34507a" opacity="0.7" transform="rotate(0 90.93006658132072 37.379261248193004)"/><ellipse cx="38.18267320456667" cy="45.0755613874522" rx="1.3" ry="1.3" fill="#205a50" opacity="0.7" transform="rotate(0 38.18267320456667 45.0755613874522)"/><ellipse cx="30.69970539767543" cy="97.93891844437934" rx="1.3" ry="1.3" fill="#6a3048" opacity="0.7" transform="rotate(0 30.69970539767543 97.93891844437934)"/><ellipse cx="96.73224004048168" cy="53.66972080998587" rx="1.3" ry="1.3" fill="#3a6a40" opacity="0.7" transform="rotate(0 96.73224004048168 53.66972080998587)"/><ellipse cx="67.3758888677339" cy="24.27823290517852" rx="1.3" ry="1.3" fill="#34507a" opacity="0.7" transform="rotate(0 67.3758888677339 24.27823290517852)"/><ellipse cx="45.050986532630205" cy="112.49584794073957" rx="1.3" ry="1.3" fill="#5a5a20" opacity="0.7" transform="rotate(0 45.050986532630205 112.49584794073957)"/><ellipse cx="32.36731567711317" cy="49.993890397846585" rx="1.3" ry="1.3" fill="#3a6a40" opacity="0.7" transform="rotate(0 32.36731567711317 49.993890397846585)"/><ellipse cx="98.04794526058849" cy="56.655944413812975" rx="1.3" ry="1.3" fill="#3a6a40" opacity="0.7" transform="rotate(0 98.04794526058849 56.655944413812975)"/><ellipse cx="99.13381183624082" cy="91.65823851807579" rx="1.3" ry="1.3" fill="#205a50" opacity="0.7" transform="rotate(0 99.13381183624082 91.65823851807579)"/><ellipse cx="102.68143492422" cy="70.77527954092294" rx="1.3" ry="1.3" fill="#34507a" opacity="0.7" transform="rotate(0 102.68143492422 70.77527954092294)"/><ellipse cx="55.84326737335682" cy="22.214902018204477" rx="1.3" ry="1.3" fill="#34507a" opacity="0.7" transform="rotate(0 55.84326737335682 22.214902018204477)"/><ellipse cx="99.76180331505113" cy="79.76291308342705" rx="1.3" ry="1.3" fill="#6a3048" opacity="0.7" transform="rotate(0 99.76180331505113 79.76291308342705)"/><ellipse cx="36.122661521104604" cy="42.08146692774889" rx="1.3" ry="1.3" fill="#6a3048" opacity="0.7" transform="rotate(0 36.122661521104604 42.08146692774889)"/><ellipse cx="67.85584682515034" cy="28.599061298819542" rx="1.3" ry="1.3" fill="#6a3048" opacity="0.7" transform="rotate(0 67.85584682515034 28.599061298819542)"/><ellipse cx="32.43254978409704" cy="104.24137987500906" rx="1.3" ry="1.3" fill="#5a5a20" opacity="0.7" transform="rotate(0 32.43254978409704 104.24137987500906)"/><ellipse cx="95.51335070355894" cy="96.15411027373888" rx="1.3" ry="1.3" fill="#205a50" opacity="0.7" transform="rotate(0 95.51335070355894 96.15411027373888)"/><ellipse cx="58.12031966160953" cy="117.08317515993431" rx="1.3" ry="1.3" fill="#5a5a20" opacity="0.7" transform="rotate(0 58.12031966160953 117.08317515993431)"/><ellipse cx="86.84966366693043" cy="38.213885555731515" rx="1.3" ry="1.3" fill="#5a5a20" opacity="0.7" transform="rotate(0 86.84966366693043 38.213885555731515)"/><ellipse cx="101.57934485703757" cy="68.75590728135995" rx="1.3" ry="1.3" fill="#5a5a20" opacity="0.7" transform="rotate(0 101.57934485703757 68.75590728135995)"/><ellipse cx="96.6985560464531" cy="61.215083180717656" rx="1.3" ry="1.3" fill="#6a3048" opacity="0.7" transform="rotate(0 96.6985560464531 61.215083180717656)"/><ellipse cx="85.81773208053508" cy="113.47950421887603" rx="1.3" ry="1.3" fill="#3a6a40" opacity="0.7" transform="rotate(0 85.81773208053508 113.47950421887603)"/><ellipse cx="27.123520420191603" cy="77.63030052856067" rx="1.3" ry="1.3" fill="#34507a" opacity="0.7" transform="rotate(0 27.123520420191603 77.63030052856067)"/><ellipse cx="57.25448054037606" cy="116.95015151840371" rx="1.3" ry="1.3" fill="#205a50" opacity="0.7" transform="rotate(0 57.25448054037606 116.95015151840371)"/><ellipse cx="38.881861960738505" cy="108.77599896949195" rx="1.3" ry="1.3" fill="#6a3048" opacity="0.7" transform="rotate(0 38.881861960738505 108.77599896949195)"/><ellipse cx="50.664567285554185" cy="27.96444745351716" rx="1.3" ry="1.3" fill="#205a50" opacity="0.7" transform="rotate(0 50.664567285554185 27.96444745351716)"/><ellipse cx="42.563111968584096" cy="31.22390282149788" rx="1.3" ry="1.3" fill="#5a5a20" opacity="0.7" transform="rotate(0 42.563111968584096 31.22390282149788)"/><ellipse cx="95.01263089558653" cy="42.960496529292925" rx="1.3" ry="1.3" fill="#205a50" opacity="0.7" transform="rotate(0 95.01263089558653 42.960496529292925)"/><ellipse cx="36.17695921956641" cy="102.58093845813603" rx="1.3" ry="1.3" fill="#3a6a40" opacity="0.7" transform="rotate(0 36.17695921956641 102.58093845813603)"/><ellipse cx="28.557015268362278" cy="78.47670177530753" rx="1.3" ry="1.3" fill="#6a3048" opacity="0.7" transform="rotate(0 28.557015268362278 78.47670177530753)"/><ellipse cx="95.27745447297067" cy="91.66431533678744" rx="1.3" ry="1.3" fill="#6a3048" opacity="0.7" transform="rotate(0 95.27745447297067 91.66431533678744)"/><ellipse cx="92.61614351365061" cy="104.33840687247672" rx="1.3" ry="1.3" fill="#3a6a40" opacity="0.7" transform="rotate(0 92.61614351365061 104.33840687247672)"/><ellipse cx="97.88907110817868" cy="73.065816800899" rx="1.3" ry="1.3" fill="#3a6a40" opacity="0.7" transform="rotate(0 97.88907110817868 73.065816800899)"/><ellipse cx="99.32054607489485" cy="57.45135451825783" rx="1.3" ry="1.3" fill="#3a6a40" opacity="0.7" transform="rotate(0 99.32054607489485 57.45135451825783)"/><ellipse cx="90.20879540827451" cy="37.98077458522334" rx="1.3" ry="1.3" fill="#6a3048" opacity="0.7" transform="rotate(0 90.20879540827451 37.98077458522334)"/><ellipse cx="37.64932668982544" cy="33.69203981573277" rx="1.3" ry="1.3" fill="#205a50" opacity="0.7" transform="rotate(0 37.64932668982544 33.69203981573277)"/><ellipse cx="41.857181854065445" cy="106.63357209300932" rx="1.3" ry="1.3" fill="#5a5a20" opacity="0.7" transform="rotate(0 41.857181854065445 106.63357209300932)"/><ellipse cx="100.12117822174471" cy="70.92457327910302" rx="1.3" ry="1.3" fill="#5a5a20" opacity="0.7" transform="rotate(0 100.12117822174471 70.92457327910302)"/><ellipse cx="51.178221654675234" cy="114.491508803541" rx="1.3" ry="1.3" fill="#34507a" opacity="0.7" transform="rotate(0 51.178221654675234 114.491508803541)"/><ellipse cx="61.803925711529146" cy="25.062177014338673" rx="1.3" ry="1.3" fill="#6a3048" opacity="0.7" transform="rotate(0 61.803925711529146 25.062177014338673)"/><ellipse cx="29.902824705129454" cy="68.34682767183983" rx="1.3" ry="1.3" fill="#205a50" opacity="0.7" transform="rotate(0 29.902824705129454 68.34682767183983)"/><ellipse cx="39.60649332276914" cy="111.20541434401312" rx="1.3" ry="1.3" fill="#3a6a40" opacity="0.7" transform="rotate(0 39.60649332276914 111.20541434401312)"/><ellipse cx="65.78720009167236" cy="26.756816447726102" rx="1.3" ry="1.3" fill="#3a6a40" opacity="0.7" transform="rotate(0 65.78720009167236 26.756816447726102)"/><ellipse cx="52.49825251543156" cy="29.649728841220146" rx="1.3" ry="1.3" fill="#34507a" opacity="0.7" transform="rotate(0 52.49825251543156 29.649728841220146)"/><ellipse cx="93.64718696504488" cy="47.463378961809866" rx="1.3" ry="1.3" fill="#6a3048" opacity="0.7" transform="rotate(0 93.64718696504488 47.463378961809866)"/><ellipse cx="26.39336809170964" cy="62.65078184685835" rx="1.3" ry="1.3" fill="#34507a" opacity="0.7" transform="rotate(0 26.39336809170964 62.65078184685835)"/><ellipse cx="39.64303647213565" cy="35.71795969938924" rx="1.3" ry="1.3" fill="#6a3048" opacity="0.7" transform="rotate(0 39.64303647213565 35.71795969938924)"/><ellipse cx="77.35285558786775" cy="24.882758734319452" rx="1.3" ry="1.3" fill="#6a3048" opacity="0.7" transform="rotate(0 77.35285558786775 24.882758734319452)"/><ellipse cx="75.24997156758974" cy="118.79628939970888" rx="1.3" ry="1.3" fill="#3a6a40" opacity="0.7" transform="rotate(0 75.24997156758974 118.79628939970888)"/><ellipse cx="102.40673429023765" cy="69.67106744209781" rx="1.3" ry="1.3" fill="#5a5a20" opacity="0.7" transform="rotate(0 102.40673429023765 69.67106744209781)"/><ellipse cx="61.82305230861081" cy="122.98350018969765" rx="1.3" ry="1.3" fill="#34507a" opacity="0.7" transform="rotate(0 61.82305230861081 122.98350018969765)"/><ellipse cx="26.607558556091426" cy="90.05780676077538" rx="1.3" ry="1.3" fill="#34507a" opacity="0.7" transform="rotate(0 26.607558556091426 90.05780676077538)"/><ellipse cx="98.01880637001659" cy="59.90471951864731" rx="1.3" ry="1.3" fill="#6a3048" opacity="0.7" transform="rotate(0 98.01880637001659 59.90471951864731)"/><path d="M60.0 25.0L55.0 38.0L50.0 52.0" stroke="#40d8b8" stroke-width="6.8" fill="none" stroke-linecap="round" stroke-linejoin="round" opacity="1"/><path d="M58.0 23.0L61.0 27.0" stroke="#a0e040" stroke-width="4.5" fill="none" stroke-linecap="round" stroke-linejoin="round" opacity="1"/><path d="M46.0 29.0L48.0 39.0" stroke="#90e0a0" stroke-width="4.5" fill="none" stroke-linecap="round" stroke-linejoin="round" opacity="1"/><path d="M36.0 42.0L42.0 50.0" stroke="#f0a0b0" stroke-width="4.8" fill="none" stroke-linecap="round" stroke-linejoin="round" opacity="1"/><path d="M42.0 50.0L44.0 60.0" stroke="#b0e040" stroke-width="4.8" fill="none" stroke-linecap="round" stroke-linejoin="round" opacity="1"/><path d="M30.0 47.0L32.0 54.0" stroke="#9070d0" stroke-width="3.0" fill="none" stroke-linecap="round" stroke-linejoin="round" opacity="1"/><path d="M58.0 47.0L60.0 57.0" stroke="#50e090" stroke-width="4.5" fill="none" stroke-linecap="round" stroke-linejoin="round" opacity="1"/><path d="M28.0 57.0L39.0 63.0" stroke="#ff8068" stroke-width="4.8" fill="none" stroke-linecap="round" stroke-linejoin="round" opacity="1"/><path d="M24.0 66.0L37.0 69.0" stroke="#ff5a80" stroke-width="4.5" fill="none" stroke-linecap="round" stroke-linejoin="round" opacity="1"/><path d="M48.0 52.0L49.0 58.0" stroke="#9070e0" stroke-width="4.0" fill="none" stroke-linecap="round" stroke-linejoin="round" opacity="1"/><ellipse cx="40" cy="68" rx="3.9" ry="7.2" fill="#40e060" opacity="1" transform="rotate(0 40 68)"/><path d="M71.0 26.0L74.0 49.0" stroke="#60e040" stroke-width="6.0" fill="none" stroke-linecap="round" stroke-linejoin="round" opacity="1"/><path d="M78.0 26.0L80.0 44.0" stroke="#90e080" stroke-width="4.8" fill="none" stroke-linecap="round" stroke-linejoin="round" opacity="1"/><path d="M74.0 42.0L74.0 52.0" stroke="#50d8e0" stroke-width="4.5" fill="none" stroke-linecap="round" stroke-linejoin="round" opacity="1"/><ellipse cx="66.5" cy="52" rx="2.6" ry="4.8" fill="#40e080" opacity="1" transform="rotate(0 66.5 52)"/><path d="M83.0 44.0L89.0 42.0" stroke="#f090a0" stroke-width="4.8" fill="none" stroke-linecap="round" stroke-linejoin="round" opacity="1"/><path d="M82.0 54.0L96.0 56.0" stroke="#f040a0" stroke-width="5.1" fill="none" stroke-linecap="round" stroke-linejoin="round" opacity="1"/><path d="M84.0 62.0L98.0 61.0" stroke="#e0a040" stroke-width="4.5" fill="none" stroke-linecap="round" stroke-linejoin="round" opacity="1"/><ellipse cx="86" cy="68" rx="6.5" ry="6.0" fill="#a0e060" opacity="0.95" transform="rotate(0 86 68)"/><path d="M88.0 32.0L94.0 46.0" stroke="#305a30" stroke-width="3.0" fill="none" stroke-linecap="round" stroke-linejoin="round" opacity="1"/><path d="M25.0 74.0L33.0 78.0" stroke="#ff5050" stroke-width="5.1" fill="none" stroke-linecap="round" stroke-linejoin="round" opacity="1"/><ellipse cx="39" cy="82" rx="5.9" ry="12.0" fill="#40e060" opacity="0.95" transform="rotate(-10 39 82)"/><path d="M26.0 89.0L38.0 90.0" stroke="#f050c0" stroke-width="4.8" fill="none" stroke-linecap="round" stroke-linejoin="round" opacity="1"/><path d="M28.0 96.0L39.0 98.0" stroke="#f08080" stroke-width="5.1" fill="none" stroke-linecap="round" stroke-linejoin="round" opacity="1"/><path d="M34.0 106.0L38.0 115.0" stroke="#50e080" stroke-width="4.2" fill="none" stroke-linecap="round" stroke-linejoin="round" opacity="1"/><path d="M49.0 56.0L46.0 70.0L45.0 84.0L46.0 98.0L49.0 112.0" stroke="#9098f0" stroke-width="7" fill="none" stroke-linecap="round" stroke-linejoin="round" opacity="1"/><path d="M48.0 84.0L48.0 100.0" stroke="#60d0e0" stroke-width="4.5" fill="none" stroke-linecap="round" stroke-linejoin="round" opacity="1"/><path d="M55.0 88.0L59.0 96.0" stroke="#40d0a0" stroke-width="4.8" fill="none" stroke-linecap="round" stroke-linejoin="round" opacity="1"/><path d="M56.0 100.0L60.0 108.0" stroke="#c0e060" stroke-width="4.5" fill="none" stroke-linecap="round" stroke-linejoin="round" opacity="1"/><path d="M57.0 113.0L62.0 120.0" stroke="#d090e0" stroke-width="4.8" fill="none" stroke-linecap="round" stroke-linejoin="round" opacity="1"/><path d="M48.0 116.0L58.0 122.0" stroke="#60d0e0" stroke-width="4.5" fill="none" stroke-linecap="round" stroke-linejoin="round" opacity="1"/><path d="M78.0 52.0L81.0 66.0L82.0 80.0L81.0 94.0L78.0 106.0" stroke="#9490f4" stroke-width="7" fill="none" stroke-linecap="round" stroke-linejoin="round" opacity="1"/><ellipse cx="82.5" cy="77" rx="2.6" ry="7.2" fill="#40e070" opacity="1" transform="rotate(0 82.5 77)"/><path d="M81.0 84.0L85.0 100.0" stroke="#a0e0a0" stroke-width="6.0" fill="none" stroke-linecap="round" stroke-linejoin="round" opacity="1"/><path d="M89.0 76.0L100.0 74.0" stroke="#f040b0" stroke-width="4.5" fill="none" stroke-linecap="round" stroke-linejoin="round" opacity="1"/><path d="M91.0 82.0L102.0 80.0" stroke="#ff8040" stroke-width="4.5" fill="none" stroke-linecap="round" stroke-linejoin="round" opacity="1"/><path d="M89.0 92.0L100.0 91.0" stroke="#ff60a0" stroke-width="4.8" fill="none" stroke-linecap="round" stroke-linejoin="round" opacity="1"/><path d="M90.0 103.0L102.0 102.0" stroke="#ff9080" stroke-width="4.5" fill="none" stroke-linecap="round" stroke-linejoin="round" opacity="1"/><path d="M93.0 109.0L99.0 114.0" stroke="#a080e0" stroke-width="3.9" fill="none" stroke-linecap="round" stroke-linejoin="round" opacity="1"/><path d="M68.0 105.0L72.0 118.0" stroke="#70e0a0" stroke-width="4.8" fill="none" stroke-linecap="round" stroke-linejoin="round" opacity="1"/><path d="M81.0 110.0L84.0 120.0" stroke="#60d8d0" stroke-width="4.5" fill="none" stroke-linecap="round" stroke-linejoin="round" opacity="1"/><path d="M66.0 116.0L71.0 122.0" stroke="#f070c0" stroke-width="4.5" fill="none" stroke-linecap="round" stroke-linejoin="round" opacity="1"/><path d="M66.0 90.0L69.0 94.0" stroke="#40e0c0" stroke-width="4.5" fill="none" stroke-linecap="round" stroke-linejoin="round" opacity="1"/><path d="M53.0 49.0L58.0 60.0L64.0 72.0L70.0 85.0L75.0 100.0" stroke="#f878b0" stroke-width="6.5" fill="none" stroke-linecap="round" stroke-linejoin="round" opacity="1"/><path d="M75.0 48.0L70.0 60.0L64.0 72.0L58.0 84.0L53.0 98.0" stroke="#f880b8" stroke-width="6.5" fill="none" stroke-linecap="round" stroke-linejoin="round" opacity="1"/><ellipse cx="64" cy="70" rx="3.9" ry="7.2" fill="#ff3048" opacity="1" transform="rotate(0 64 70)"/><path d="M62.0 64.0L64.0 76.0" stroke="#ff3030" stroke-width="3.0" fill="none" stroke-linecap="round" stroke-linejoin="round" opacity="1"/><ellipse cx="63.5" cy="40" rx="2.2" ry="11" fill="#000" opacity="1" transform="rotate(0 63.5 40)"/><ellipse cx="64" cy="98" rx="2.5" ry="6" fill="#000" opacity="0.95" transform="rotate(0 64 98)"/><ellipse cx="55" cy="74" rx="1.8" ry="8.4" fill="#001810" opacity="0.9" transform="rotate(0 55 74)"/><ellipse cx="72" cy="74" rx="1.8" ry="8.4" fill="#001810" opacity="0.9" transform="rotate(0 72 74)"/></g><text x="5" y="152" font-family="Liberation Sans" font-size="11" fill="#fff">65</text></svg><div class="a" style="left:822px;top:593px;width:495px;height:80px;border:1px solid #a9a9a9;box-shadow:inset 1px 1px 0 #fff,1px 1px 0 #fff;box-sizing:border-box"></div><div class="t" style="left:828px;top:588.95px;padding:0 4px;background:#eeeeee;font-family:'Liberation Serif', serif;font-size:12px;font-weight:bold;color:#000;">Image slice</div><div class="a" style="left:833px;top:612px;width:455px;height:6px;border:1px solid #7a8a99;background:linear-gradient(to bottom,#a9bfd6 0,#a9bfd6 1px,#f2f2f2 1px,#f2f2f2 100%)"></div><div class="a" style="left:833px;top:612px;width:258px;height:6px;border:1px solid #6382bf;border-right:none;background:linear-gradient(to bottom,#ffffff 0,#ffffff 1px,#d2e2f2 1px,#a9bed4 100%)"></div><div class="a" style="left:833px;top:627px;width:1px;height:6px;background:#a3b8cc"></div><div class="a" style="left:873px;top:627px;width:1px;height:6px;background:#a3b8cc"></div><div class="a" style="left:914px;top:627px;width:1px;height:6px;background:#a3b8cc"></div><div class="a" style="left:954px;top:627px;width:1px;height:6px;background:#a3b8cc"></div><div class="a" style="left:994px;top:627px;width:1px;height:6px;background:#a3b8cc"></div><div class="a" style="left:1034px;top:627px;width:1px;height:6px;background:#a3b8cc"></div><div class="a" style="left:1075px;top:627px;width:1px;height:6px;background:#a3b8cc"></div><div class="a" style="left:1115px;top:627px;width:1px;height:6px;background:#a3b8cc"></div><div class="a" style="left:1155px;top:627px;width:1px;height:6px;background:#a3b8cc"></div><div class="a" style="left:1195px;top:627px;width:1px;height:6px;background:#a3b8cc"></div><div class="a" style="left:1236px;top:627px;width:1px;height:6px;background:#a3b8cc"></div><div class="a" style="left:1276px;top:627px;width:1px;height:6px;background:#a3b8cc"></div><svg class="a" style="left:1084px;top:607px" width="15" height="16" viewBox="0 0 15 16"><defs><linearGradient id="tg" x1="0" y1="0" x2="0" y2="1"><stop offset="0" stop-color="#c4daf2"/><stop offset="0.35" stop-color="#ffffff"/><stop offset="0.6" stop-color="#ffffff"/><stop offset="1" stop-color="#aecbe8"/></linearGradient></defs>
<path d="M1.5 0.5 L13.5 0.5 L14.5 1.5 L14.5 8.5 L7.5 15.5 L0.5 8.5 L0.5 1.5 Z" fill="url(#tg)" stroke="#333" stroke-width="1"/></svg><div class="t" style="left:825.5px;top:645.53px;font-family:'Liberation Serif', serif;font-size:12.5px;font-weight:normal;color:#000;">1</div><div class="t" style="left:1295px;top:645.53px;font-family:'Liberation Serif', serif;font-size:12.5px;font-weight:normal;color:#000;">114</div><div class="t" style="left:1045px;top:646.84px;font-family:'Liberation Sans', sans-serif;font-size:12px;font-weight:bold;color:#222;">65/114</div><div class="a" style="left:820px;top:676px;width:499px;height:77px;border:1px solid #a9a9a9;box-shadow:inset 1px 1px 0 #fff,1px 1px 0 #fff;box-sizing:border-box"></div><div class="a" style="left:995px;top:682px;width:30px;height:30px;background:linear-gradient(to bottom,#dde8f3 0%,#ffffff 30%,#dde8f3 60%,#b8cfe5 100%)"></div><div class="a" style="left:1035px;top:682px;width:30px;height:30px;background:linear-gradient(to bottom,#dde8f3 0%,#ffffff 30%,#dde8f3 60%,#b8cfe5 100%)"></div><div class="a" style="left:1075px;top:682px;width:30px;height:30px;background:linear-gradient(to bottom,#dde8f3 0%,#ffffff 30%,#dde8f3 60%,#b8cfe5 100%)"></div><div class="a" style="left:1115px;top:682px;width:30px;height:30px;background:linear-gradient(to bottom,#dde8f3 0%,#ffffff 30%,#dde8f3 60%,#b8cfe5 100%)"></div><div class="a" style="left:1077px;top:684px;width:26px;height:26px;border:1px solid #8ea4bc"></div><svg class="a" style="left:995px;top:682px" width="30" height="30" viewBox="0 0 30 30">
<path d="M15.8 15.8 L22.8 22.3" stroke="#000" stroke-width="3.4" stroke-linecap="round"/>
<path d="M15.8 15.8 L22.8 22.3" stroke="#10b8f0" stroke-width="1.4" stroke-linecap="round"/>
<circle cx="12.5" cy="12.5" r="4.6" fill="#fff" fill-opacity="0.6" stroke="#000" stroke-width="1.2"/><path d="M10.0 12.5H15.0M12.5 10.0V15.0" stroke="#000" stroke-width="1.1"/>
<path d="M3.5 21 H9.5 V22 L6.5 26 L3.5 22 Z" fill="#000"/></svg><svg class="a" style="left:1035px;top:682px" width="30" height="30" viewBox="0 0 30 30">
<path d="M15.8 15.8 L22.8 22.3" stroke="#000" stroke-width="3.4" stroke-linecap="round"/>
<path d="M15.8 15.8 L22.8 22.3" stroke="#10b8f0" stroke-width="1.4" stroke-linecap="round"/>
<circle cx="12.5" cy="12.5" r="4.6" fill="#fff" fill-opacity="0.6" stroke="#000" stroke-width="1.2"/><path d="M10.0 12.5H15.0" stroke="#000" stroke-width="1.1"/>
<path d="M3.5 21 H9.5 V22 L6.5 26 L3.5 22 Z" fill="#000"/></svg><div class="t" style="left:1077.5px;top:686.5px;width:22px;text-align:center;font-family:'Liberation Serif',serif;font-weight:bold;font-size:21px;line-height:21px;color:#000;-webkit-text-stroke:0.6px #000;transform:scaleX(0.6);transform-origin:50% 50%">1:1</div><svg class="a" style="left:1115px;top:682px" width="30" height="30" viewBox="0 0 30 30">
<defs><linearGradient id="cg" x1="0" y1="0" x2="1" y2="0"><stop offset="0" stop-color="#9a9a9a"/><stop offset="0.4" stop-color="#e8e8e8"/><stop offset="1" stop-color="#808080"/></linearGradient>
<radialGradient id="lg" cx="0.45" cy="0.45" r="0.6"><stop offset="0" stop-color="#40f0ff"/><stop offset="0.6" stop-color="#1090e0"/><stop offset="1" stop-color="#405070"/></radialGradient></defs>
<path d="M7 11 Q7 9 10 9 L14 9 L15 7 L22 7 L24 8.5 L24 20 L13 22 L9 23.5 L7 22 Z" fill="url(#cg)" stroke="#707070" stroke-width="0.6"/>
<path d="M7.3 10.5 Q9 8.8 13 9.3 L13 11 Q9 10.5 7.3 12 Z" fill="#202020"/>
<path d="M16 10 L23.5 9.5 L23.5 12 L16 12.5 Z" fill="#404040"/>
<path d="M10 9 L11.2 7 L12.4 9 Z" fill="#3050d0"/>
<circle cx="18.6" cy="18.6" r="4.4" fill="#6a6a6a"/>
<circle cx="18.6" cy="18.6" r="3.2" fill="url(#lg)"/>
<circle cx="10.5" cy="16" r="0.8" fill="#d04040"/>
</svg><div class="t" style="left:1055px;top:724.84px;font-family:'Liberation Sans', sans-serif;font-size:12px;font-weight:bold;color:#222;">M:1.0</div></body></html>
